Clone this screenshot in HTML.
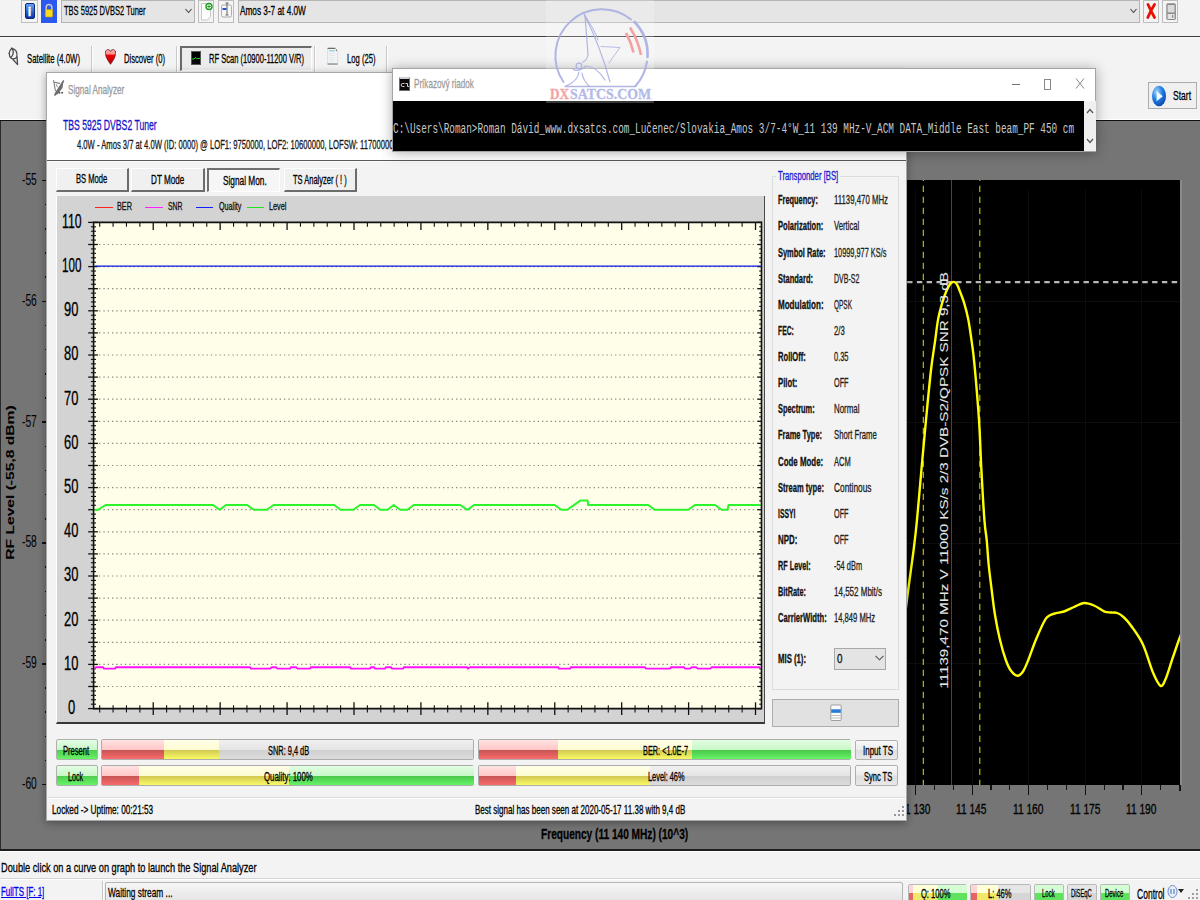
<!DOCTYPE html>
<html><head><meta charset="utf-8"><title>Signal Analyzer</title><style>
html,body{margin:0;padding:0;}
body{width:1200px;height:900px;overflow:hidden;position:relative;background:#f0f0f0;
font-family:"Liberation Sans", sans-serif;}
.t{position:absolute;white-space:nowrap;}
div{box-sizing:border-box;}
svg{position:absolute;}
</style></head><body>
<div style="position:absolute;left:0.00px;top:0.00px;width:1200.00px;height:36.00px;background:#f3f3f3;"></div>
<div style="position:absolute;left:0.00px;top:36.00px;width:1200.00px;height:1.00px;background:#3c3c3c;"></div>
<div style="position:absolute;left:0.00px;top:37.00px;width:1200.00px;height:1.00px;background:#fafafa;"></div>
<div style="position:absolute;left:21.00px;top:0.00px;width:16.50px;height:22.50px;background:#f4f4f4;border:1px solid #bdbdbd;"></div>
<div style="position:absolute;left:24.50px;top:3.00px;width:10.00px;height:15.50px;background:linear-gradient(#6aa0f0,#0c2ea8);border-radius:2px;border:1px solid #0a2a80;"></div>
<div class="t" style="left:27.70px;top:4.99px;font-size:13.00px;line-height:13.00px;color:#fff;font-weight:bold;-webkit-text-stroke:0.30px #fff;">i</div>
<div style="position:absolute;left:41.00px;top:0.00px;width:16.00px;height:22.50px;background:#2b58ee;"></div>
<svg style="left:44px;top:2px" width="10" height="16" viewBox="0 0 10 16"><path d="M2.2 8V5.2a2.8 2.8 0 0 1 5.6 0V8" fill="none" stroke="#c8c8c8" stroke-width="1.5"/><rect x="1.3" y="7.5" width="7.4" height="7.5" rx="1" fill="#f6dc1a" stroke="#c09a00" stroke-width="0.6"/></svg>
<div style="position:absolute;left:61.00px;top:0.00px;width:133.50px;height:22.50px;background:#e5e5e5;border:1px solid #b4b4b4;"></div>
<div class="t" style="left:63.50px;top:3.57px;font-size:13.50px;line-height:13.50px;color:#000;transform:scaleX(0.5571);transform-origin:0 0;-webkit-text-stroke:0.30px #000;">TBS 5925 DVBS2 Tuner</div>
<svg style="left:185px;top:8px" width="7" height="6" viewBox="0 0 7 6"><path d="M0.5 1L3.5 4.5L6.5 1" fill="none" stroke="#444" stroke-width="1.1"/></svg>
<div style="position:absolute;left:198.00px;top:0.00px;width:16.00px;height:22.50px;background:#f4f4f4;border:1px solid #bdbdbd;"></div>
<svg style="left:200px;top:1px" width="13" height="20" viewBox="0 0 13 20"><path d="M1.5 2.5h6l3 3v10l-3 3.5h-6z" fill="#fdfdfd" stroke="#bdbdbd" stroke-width="0.8"/><circle cx="9" cy="5.5" r="3" fill="#fff" stroke="#1aa01a" stroke-width="1.4"/><path d="M9 3.8v3.4M7.3 5.5h3.4" stroke="#1aa01a" stroke-width="1"/></svg>
<div style="position:absolute;left:218.00px;top:0.00px;width:16.00px;height:22.50px;background:#f4f4f4;border:1px solid #bdbdbd;"></div>
<svg style="left:220px;top:2px" width="13" height="17" viewBox="0 0 13 17"><rect x="1.5" y="3" width="10" height="12" rx="1.5" fill="#f6f6f6" stroke="#9a9a9a" stroke-width="0.8"/><rect x="2.5" y="6" width="4" height="2" fill="#2050d0"/><path d="M7 1v12M5.5 1h3M5.5 13h3" stroke="#555" stroke-width="0.9"/></svg>
<div style="position:absolute;left:237.50px;top:0.00px;width:902.00px;height:22.50px;background:#e5e5e5;border:1px solid #b4b4b4;"></div>
<div class="t" style="left:240.00px;top:3.57px;font-size:13.50px;line-height:13.50px;color:#000;transform:scaleX(0.6093);transform-origin:0 0;-webkit-text-stroke:0.30px #000;">Amos 3-7 at 4.0W</div>
<svg style="left:1130px;top:8px" width="7" height="6" viewBox="0 0 7 6"><path d="M0.5 1L3.5 4.5L6.5 1" fill="none" stroke="#444" stroke-width="1.1"/></svg>
<div style="position:absolute;left:1143.00px;top:0.00px;width:16.00px;height:22.50px;background:#f4f4f4;border:1px solid #bdbdbd;"></div>
<svg style="left:1145px;top:2px" width="12" height="18" viewBox="0 0 12 18"><path d="M3 2.5Q6 9 9.5 15.5M9.5 2.5Q6 8 2.8 15.5" fill="none" stroke="#e81000" stroke-width="2.8" stroke-linecap="round"/></svg>
<div style="position:absolute;left:1162.00px;top:0.00px;width:16.00px;height:22.50px;background:#f4f4f4;border:1px solid #bdbdbd;"></div>
<svg style="left:1164px;top:2px" width="14" height="19" viewBox="0 0 14 19"><rect x="2.3" y="1.3" width="9.6" height="16.6" rx="1.6" fill="#8a8a8a"/><rect x="3.6" y="3" width="7" height="7.5" fill="#dadada"/><rect x="3.6" y="12" width="7" height="5" fill="#e4e4e4"/><rect x="8.2" y="13" width="1" height="2.8" fill="#777"/></svg>
<div style="position:absolute;left:0.00px;top:38.00px;width:1200.00px;height:80.80px;background:#f3f3f3;"></div>
<div style="position:absolute;left:91.00px;top:46.00px;width:1.00px;height:25.50px;background:#c8c8c8;"></div>
<div style="position:absolute;left:92.00px;top:46.00px;width:1.00px;height:25.50px;background:#ffffff;"></div>
<div style="position:absolute;left:176.00px;top:46.00px;width:1.00px;height:25.50px;background:#c8c8c8;"></div>
<div style="position:absolute;left:177.00px;top:46.00px;width:1.00px;height:25.50px;background:#ffffff;"></div>
<div style="position:absolute;left:313.50px;top:46.00px;width:1.00px;height:25.50px;background:#c8c8c8;"></div>
<div style="position:absolute;left:314.50px;top:46.00px;width:1.00px;height:25.50px;background:#ffffff;"></div>
<div style="position:absolute;left:386.00px;top:46.00px;width:1.00px;height:25.50px;background:#c8c8c8;"></div>
<div style="position:absolute;left:387.00px;top:46.00px;width:1.00px;height:25.50px;background:#ffffff;"></div>
<svg style="left:0px;top:40px" width="30" height="30" viewBox="0 40 30 30"><g fill="none" stroke="#4a4a4a" stroke-width="1.3" stroke-linejoin="round" stroke-linecap="round"><path d="M11.8 48.3C15.5 48.8 17.6 52 16.8 56.6"/><path d="M11.8 48.3C14 50.5 13.6 54.5 11.5 56.8"/><path d="M9.2 53.2C9.3 58 12 60.6 16.6 57.6"/><path d="M11.8 48.3C10.2 49.8 9.3 51.3 9.2 53.2"/><path d="M13 59.5L17.6 64.6L17 56.8"/></g></svg>
<div class="t" style="left:27.00px;top:51.57px;font-size:13.50px;line-height:13.50px;color:#000;transform:scaleX(0.5742);transform-origin:0 0;-webkit-text-stroke:0.30px #000;">Satellite (4.0W)</div>
<svg style="left:104.5px;top:48.5px" width="11" height="16" viewBox="0 0 11 16"><defs><linearGradient id="hg" x1="0" y1="0" x2="0" y2="1"><stop offset="0" stop-color="#ffb0b0"/><stop offset="0.3" stop-color="#ff9090"/><stop offset="0.38" stop-color="#f00000"/><stop offset="1" stop-color="#c00000"/></linearGradient></defs><path d="M5.5 15.3C2.5 11 0.5 8 0.5 4.2A2.6 2.8 0 0 1 5.5 2.6A2.6 2.8 0 0 1 10.5 4.2C10.5 8 8.5 11 5.5 15.3z" fill="url(#hg)" stroke="#5a1010" stroke-width="0.7"/></svg>
<div class="t" style="left:124.00px;top:51.57px;font-size:13.50px;line-height:13.50px;color:#000;transform:scaleX(0.5632);transform-origin:0 0;-webkit-text-stroke:0.30px #000;">Discover (0)</div>
<div style="position:absolute;left:179.60px;top:45.60px;width:132.20px;height:25.80px;background:#ececec;border-top:2px solid #6a6a6a;border-left:2px solid #6a6a6a;border-right:1px solid #fff;border-bottom:1px solid #fff;"></div>
<div style="position:absolute;left:191.00px;top:51.00px;width:9.50px;height:14.00px;background:#000;border:1px solid #555;"></div>
<svg style="left:191px;top:51px" width="10" height="14" viewBox="0 0 10 14"><path d="M1 8h2l1.5-1.5l1 1h3.5" fill="none" stroke="#10d010" stroke-width="1"/></svg>
<div class="t" style="left:209.00px;top:51.57px;font-size:13.50px;line-height:13.50px;color:#000;transform:scaleX(0.5585);transform-origin:0 0;-webkit-text-stroke:0.30px #000;">RF Scan (10900-11200 V/R)</div>
<svg style="left:326px;top:47px" width="13" height="19" viewBox="0 0 13 19"><path d="M1.6 1.3h7.8l2.2 2.3v13.6H1.6z" fill="#f2f4f6" stroke="#d6d8da" stroke-width="0.8"/><path d="M1.6 1.3h7.8M1.6 17h10" stroke="#6e6e6e" stroke-width="1.2"/><rect x="3" y="3" width="5.5" height="1.6" fill="#a8d4ea"/><path d="M3 6.5h6M3 8.5h6M3 10.5h5M3 12.5h6M3 14.5h5" stroke="#dfe2e6" stroke-width="0.7"/><circle cx="10.4" cy="3.3" r="0.7" fill="#666"/></svg>
<div class="t" style="left:347.00px;top:51.57px;font-size:13.50px;line-height:13.50px;color:#000;transform:scaleX(0.5666);transform-origin:0 0;-webkit-text-stroke:0.30px #000;">Log (25)</div>
<div style="position:absolute;left:1148.00px;top:82.00px;width:49.00px;height:26.50px;background:#f0f0f0;border:1px solid #adadad;"></div>
<svg style="left:1151px;top:87.5px" width="16" height="16" viewBox="0 0 16 16" overflow="visible"><defs><radialGradient id="sg" cx="0.35" cy="0.3" r="0.8"><stop offset="0" stop-color="#9fd4ff"/><stop offset="0.5" stop-color="#1f7ce0"/><stop offset="1" stop-color="#0a3ea8"/></radialGradient></defs><ellipse cx="8" cy="8" rx="7" ry="10.3" fill="url(#sg)"/><path d="M5.6 3L11.8 8.2L5.6 13.2z" fill="#f0faff"/></svg>
<div class="t" style="left:1173.00px;top:88.57px;font-size:13.50px;line-height:13.50px;color:#000;transform:scaleX(0.6316);transform-origin:0 0;-webkit-text-stroke:0.30px #000;">Start</div>
<div style="position:absolute;left:0.00px;top:118.80px;width:1200.00px;height:1.20px;background:#ffffff;"></div>
<div style="position:absolute;left:0.00px;top:120.00px;width:1200.00px;height:730.00px;background:#757575;"></div>
<div style="position:absolute;left:0.00px;top:120.00px;width:1200.00px;height:1.20px;background:#101010;"></div>
<div style="position:absolute;left:0.00px;top:121.00px;width:1.00px;height:729.00px;background:#2a2a2a;"></div>
<div style="position:absolute;left:0.00px;top:849.00px;width:1200.00px;height:1.50px;background:#1e1e1e;"></div>
<div style="position:absolute;left:47.00px;top:180.00px;width:1133.00px;height:605.00px;background:#000;"></div>
<div style="position:absolute;left:1180.00px;top:180.00px;width:1.60px;height:605.00px;background:#8a8a8a;"></div>
<div style="position:absolute;left:47.00px;top:300.78px;width:1133.00px;height:1.00px;background:#0d0d0d;"></div>
<div style="position:absolute;left:47.00px;top:421.66px;width:1133.00px;height:1.00px;background:#0d0d0d;"></div>
<div style="position:absolute;left:47.00px;top:542.54px;width:1133.00px;height:1.00px;background:#0d0d0d;"></div>
<div style="position:absolute;left:47.00px;top:663.42px;width:1133.00px;height:1.00px;background:#0d0d0d;"></div>
<div style="position:absolute;left:66.00px;top:190.00px;width:1.00px;height:595.00px;background:#0c0c0c;"></div>
<div style="position:absolute;left:122.60px;top:190.00px;width:1.00px;height:595.00px;background:#0c0c0c;"></div>
<div style="position:absolute;left:179.20px;top:190.00px;width:1.00px;height:595.00px;background:#0c0c0c;"></div>
<div style="position:absolute;left:235.80px;top:190.00px;width:1.00px;height:595.00px;background:#0c0c0c;"></div>
<div style="position:absolute;left:292.40px;top:190.00px;width:1.00px;height:595.00px;background:#0c0c0c;"></div>
<div style="position:absolute;left:349.00px;top:190.00px;width:1.00px;height:595.00px;background:#0c0c0c;"></div>
<div style="position:absolute;left:405.60px;top:190.00px;width:1.00px;height:595.00px;background:#0c0c0c;"></div>
<div style="position:absolute;left:462.20px;top:190.00px;width:1.00px;height:595.00px;background:#0c0c0c;"></div>
<div style="position:absolute;left:518.80px;top:190.00px;width:1.00px;height:595.00px;background:#0c0c0c;"></div>
<div style="position:absolute;left:575.40px;top:190.00px;width:1.00px;height:595.00px;background:#0c0c0c;"></div>
<div style="position:absolute;left:632.00px;top:190.00px;width:1.00px;height:595.00px;background:#0c0c0c;"></div>
<div style="position:absolute;left:688.60px;top:190.00px;width:1.00px;height:595.00px;background:#0c0c0c;"></div>
<div style="position:absolute;left:745.20px;top:190.00px;width:1.00px;height:595.00px;background:#0c0c0c;"></div>
<div style="position:absolute;left:801.80px;top:190.00px;width:1.00px;height:595.00px;background:#0c0c0c;"></div>
<div style="position:absolute;left:858.40px;top:190.00px;width:1.00px;height:595.00px;background:#0c0c0c;"></div>
<div style="position:absolute;left:915.00px;top:190.00px;width:1.00px;height:595.00px;background:#0c0c0c;"></div>
<div style="position:absolute;left:971.60px;top:190.00px;width:1.00px;height:595.00px;background:#0c0c0c;"></div>
<div style="position:absolute;left:1028.20px;top:190.00px;width:1.00px;height:595.00px;background:#0c0c0c;"></div>
<div style="position:absolute;left:1084.80px;top:190.00px;width:1.00px;height:595.00px;background:#0c0c0c;"></div>
<div style="position:absolute;left:1141.40px;top:190.00px;width:1.00px;height:595.00px;background:#0c0c0c;"></div>
<div style="position:absolute;left:950.80px;top:180.00px;width:1.00px;height:605.00px;background:#1f601f;"></div>
<div style="position:absolute;left:0;top:0;width:1200px;height:900px;clip-path:polygon(47px 180px,1180px 180px,1180px 785px,47px 785px);"><svg style="left:0;top:0" width="1200" height="900" viewBox="0 0 1200 900"><line x1="54.5" y1="282.2" x2="1180" y2="282.2" stroke="#b8b8b8" stroke-width="2.2" stroke-dasharray="5.4 4.4"/><line x1="923.3" y1="174.8" x2="923.3" y2="785" stroke="#d0c800" stroke-width="1.1" stroke-dasharray="6.2 4.8"/><line x1="979.8" y1="174.8" x2="979.8" y2="785" stroke="#d0c800" stroke-width="1.1" stroke-dasharray="6.2 4.8"/><path d="M895.00 700.00 C896.83 684.50 902.90 632.00 906.00 607.00 C909.10 582.00 911.77 564.50 913.60 550.00 C915.43 535.50 915.70 533.33 917.00 520.00 C918.30 506.67 919.90 486.67 921.40 470.00 C922.90 453.33 924.40 436.67 926.00 420.00 C927.60 403.33 929.50 383.05 931.00 370.00 C932.50 356.95 933.82 350.13 935.00 341.70 C936.18 333.27 936.90 325.88 938.10 319.40 C939.30 312.92 940.87 307.42 942.20 302.80 C943.53 298.18 944.83 294.75 946.10 291.70 C947.37 288.65 948.73 286.08 949.80 284.50 C950.87 282.92 951.63 282.57 952.50 282.20 C953.37 281.83 954.15 281.73 955.00 282.30 C955.85 282.87 956.77 284.03 957.60 285.60 C958.43 287.17 958.92 288.83 960.00 291.70 C961.08 294.57 962.72 298.18 964.10 302.80 C965.48 307.42 967.03 312.92 968.30 319.40 C969.57 325.88 970.68 334.28 971.70 341.70 C972.72 349.12 973.18 350.85 974.40 363.90 C975.62 376.95 977.83 402.32 979.00 420.00 C980.17 437.68 980.50 453.33 981.40 470.00 C982.30 486.67 983.52 508.33 984.40 520.00 C985.28 531.67 985.98 532.50 986.70 540.00 C987.42 547.50 987.87 556.67 988.70 565.00 C989.53 573.33 990.65 581.67 991.70 590.00 C992.75 598.33 993.62 606.67 995.00 615.00 C996.38 623.33 998.20 632.50 1000.00 640.00 C1001.80 647.50 1003.97 654.87 1005.80 660.00 C1007.63 665.13 1009.05 668.17 1011.00 670.80 C1012.95 673.43 1015.50 675.68 1017.50 675.80 C1019.50 675.92 1021.20 674.13 1023.00 671.50 C1024.80 668.87 1026.17 665.25 1028.30 660.00 C1030.43 654.75 1033.02 646.67 1035.80 640.00 C1038.58 633.33 1042.63 624.12 1045.00 620.00 C1047.37 615.88 1048.17 616.43 1050.00 615.30 C1051.83 614.17 1053.67 613.83 1056.00 613.20 C1058.33 612.57 1061.00 612.53 1064.00 611.50 C1067.00 610.47 1070.67 608.42 1074.00 607.00 C1077.33 605.58 1080.67 603.25 1084.00 603.00 C1087.33 602.75 1090.67 604.12 1094.00 605.50 C1097.33 606.88 1101.17 610.13 1104.00 611.30 C1106.83 612.47 1108.78 612.22 1111.00 612.50 C1113.22 612.78 1115.13 612.17 1117.30 613.00 C1119.47 613.83 1121.77 615.45 1124.00 617.50 C1126.23 619.55 1127.58 620.88 1130.70 625.30 C1133.82 629.72 1138.93 636.00 1142.70 644.00 C1146.47 652.00 1150.30 666.30 1153.30 673.30 C1156.30 680.30 1158.58 685.22 1160.70 686.00 C1162.82 686.78 1164.12 682.33 1166.00 678.00 C1167.88 673.67 1169.88 666.25 1172.00 660.00 C1174.12 653.75 1177.03 645.17 1178.70 640.50 C1180.37 635.83 1181.45 633.42 1182.00 632.00" fill="none" stroke="#ffff00" stroke-width="2.4" stroke-linejoin="round"/></svg></div>
<div class="t" style="left:948.40px;top:676.29px;font-size:15.00px;line-height:15.00px;color:#e6e6e6;transform-origin:0.00px 12.71px;transform:rotate(-90deg) scale(1.0134,0.7171);-webkit-text-stroke:0.1px #e6e6e6;">11139,470 MHz V 11000 KS/s 2/3 DVB-S2/QPSK SNR 9,3 dB</div>
<div style="position:absolute;left:42.30px;top:179.70px;width:4.70px;height:1.40px;background:#111;"></div>
<div style="position:absolute;left:45.20px;top:203.78px;width:1.80px;height:1.60px;background:#111;"></div>
<div style="position:absolute;left:45.20px;top:227.95px;width:1.80px;height:1.60px;background:#111;"></div>
<div style="position:absolute;left:45.20px;top:252.13px;width:1.80px;height:1.60px;background:#111;"></div>
<div style="position:absolute;left:45.20px;top:276.30px;width:1.80px;height:1.60px;background:#111;"></div>
<div class="t" style="left:22.20px;top:171.75px;font-size:16.00px;line-height:16.00px;color:#000;transform:scaleX(0.6407);transform-origin:0 0;-webkit-text-stroke:0.05px #000;">-55</div>
<div style="position:absolute;left:42.30px;top:300.58px;width:4.70px;height:1.40px;background:#111;"></div>
<div style="position:absolute;left:45.20px;top:324.66px;width:1.80px;height:1.60px;background:#111;"></div>
<div style="position:absolute;left:45.20px;top:348.83px;width:1.80px;height:1.60px;background:#111;"></div>
<div style="position:absolute;left:45.20px;top:373.01px;width:1.80px;height:1.60px;background:#111;"></div>
<div style="position:absolute;left:45.20px;top:397.18px;width:1.80px;height:1.60px;background:#111;"></div>
<div class="t" style="left:22.20px;top:292.63px;font-size:16.00px;line-height:16.00px;color:#000;transform:scaleX(0.6407);transform-origin:0 0;-webkit-text-stroke:0.05px #000;">-56</div>
<div style="position:absolute;left:42.30px;top:421.46px;width:4.70px;height:1.40px;background:#111;"></div>
<div style="position:absolute;left:45.20px;top:445.54px;width:1.80px;height:1.60px;background:#111;"></div>
<div style="position:absolute;left:45.20px;top:469.71px;width:1.80px;height:1.60px;background:#111;"></div>
<div style="position:absolute;left:45.20px;top:493.89px;width:1.80px;height:1.60px;background:#111;"></div>
<div style="position:absolute;left:45.20px;top:518.06px;width:1.80px;height:1.60px;background:#111;"></div>
<div class="t" style="left:22.20px;top:413.51px;font-size:16.00px;line-height:16.00px;color:#000;transform:scaleX(0.6407);transform-origin:0 0;-webkit-text-stroke:0.05px #000;">-57</div>
<div style="position:absolute;left:42.30px;top:542.34px;width:4.70px;height:1.40px;background:#111;"></div>
<div style="position:absolute;left:45.20px;top:566.42px;width:1.80px;height:1.60px;background:#111;"></div>
<div style="position:absolute;left:45.20px;top:590.59px;width:1.80px;height:1.60px;background:#111;"></div>
<div style="position:absolute;left:45.20px;top:614.77px;width:1.80px;height:1.60px;background:#111;"></div>
<div style="position:absolute;left:45.20px;top:638.94px;width:1.80px;height:1.60px;background:#111;"></div>
<div class="t" style="left:22.20px;top:534.39px;font-size:16.00px;line-height:16.00px;color:#000;transform:scaleX(0.6407);transform-origin:0 0;-webkit-text-stroke:0.05px #000;">-58</div>
<div style="position:absolute;left:42.30px;top:663.22px;width:4.70px;height:1.40px;background:#111;"></div>
<div style="position:absolute;left:45.20px;top:687.30px;width:1.80px;height:1.60px;background:#111;"></div>
<div style="position:absolute;left:45.20px;top:711.47px;width:1.80px;height:1.60px;background:#111;"></div>
<div style="position:absolute;left:45.20px;top:735.65px;width:1.80px;height:1.60px;background:#111;"></div>
<div style="position:absolute;left:45.20px;top:759.82px;width:1.80px;height:1.60px;background:#111;"></div>
<div class="t" style="left:22.20px;top:655.27px;font-size:16.00px;line-height:16.00px;color:#000;transform:scaleX(0.6407);transform-origin:0 0;-webkit-text-stroke:0.05px #000;">-59</div>
<div style="position:absolute;left:42.30px;top:784.10px;width:4.70px;height:1.40px;background:#111;"></div>
<div class="t" style="left:22.20px;top:776.15px;font-size:16.00px;line-height:16.00px;color:#000;transform:scaleX(0.6407);transform-origin:0 0;-webkit-text-stroke:0.05px #000;">-60</div>
<div class="t" style="left:14.40px;top:547.29px;font-size:15.00px;line-height:15.00px;color:#000;font-weight:bold;transform-origin:0.00px 12.71px;transform:rotate(-90deg) scale(1.0404,0.7461);-webkit-text-stroke:0.1px #000;">RF Level (-55,8 dBm)</div>
<div style="position:absolute;left:65.90px;top:785.00px;width:1.20px;height:10.00px;background:#111;"></div>
<div style="position:absolute;left:84.77px;top:785.00px;width:1.20px;height:5.00px;background:#111;"></div>
<div style="position:absolute;left:103.64px;top:785.00px;width:1.20px;height:5.00px;background:#111;"></div>
<div style="position:absolute;left:122.50px;top:785.00px;width:1.20px;height:10.00px;background:#111;"></div>
<div style="position:absolute;left:141.37px;top:785.00px;width:1.20px;height:5.00px;background:#111;"></div>
<div style="position:absolute;left:160.24px;top:785.00px;width:1.20px;height:5.00px;background:#111;"></div>
<div style="position:absolute;left:179.10px;top:785.00px;width:1.20px;height:10.00px;background:#111;"></div>
<div style="position:absolute;left:197.97px;top:785.00px;width:1.20px;height:5.00px;background:#111;"></div>
<div style="position:absolute;left:216.84px;top:785.00px;width:1.20px;height:5.00px;background:#111;"></div>
<div style="position:absolute;left:235.70px;top:785.00px;width:1.20px;height:10.00px;background:#111;"></div>
<div style="position:absolute;left:254.57px;top:785.00px;width:1.20px;height:5.00px;background:#111;"></div>
<div style="position:absolute;left:273.44px;top:785.00px;width:1.20px;height:5.00px;background:#111;"></div>
<div style="position:absolute;left:292.30px;top:785.00px;width:1.20px;height:10.00px;background:#111;"></div>
<div style="position:absolute;left:311.17px;top:785.00px;width:1.20px;height:5.00px;background:#111;"></div>
<div style="position:absolute;left:330.04px;top:785.00px;width:1.20px;height:5.00px;background:#111;"></div>
<div style="position:absolute;left:348.90px;top:785.00px;width:1.20px;height:10.00px;background:#111;"></div>
<div style="position:absolute;left:367.77px;top:785.00px;width:1.20px;height:5.00px;background:#111;"></div>
<div style="position:absolute;left:386.64px;top:785.00px;width:1.20px;height:5.00px;background:#111;"></div>
<div style="position:absolute;left:405.50px;top:785.00px;width:1.20px;height:10.00px;background:#111;"></div>
<div style="position:absolute;left:424.37px;top:785.00px;width:1.20px;height:5.00px;background:#111;"></div>
<div style="position:absolute;left:443.24px;top:785.00px;width:1.20px;height:5.00px;background:#111;"></div>
<div style="position:absolute;left:462.10px;top:785.00px;width:1.20px;height:10.00px;background:#111;"></div>
<div style="position:absolute;left:480.97px;top:785.00px;width:1.20px;height:5.00px;background:#111;"></div>
<div style="position:absolute;left:499.84px;top:785.00px;width:1.20px;height:5.00px;background:#111;"></div>
<div style="position:absolute;left:518.70px;top:785.00px;width:1.20px;height:10.00px;background:#111;"></div>
<div style="position:absolute;left:537.57px;top:785.00px;width:1.20px;height:5.00px;background:#111;"></div>
<div style="position:absolute;left:556.44px;top:785.00px;width:1.20px;height:5.00px;background:#111;"></div>
<div style="position:absolute;left:575.30px;top:785.00px;width:1.20px;height:10.00px;background:#111;"></div>
<div style="position:absolute;left:594.17px;top:785.00px;width:1.20px;height:5.00px;background:#111;"></div>
<div style="position:absolute;left:613.04px;top:785.00px;width:1.20px;height:5.00px;background:#111;"></div>
<div style="position:absolute;left:631.90px;top:785.00px;width:1.20px;height:10.00px;background:#111;"></div>
<div style="position:absolute;left:650.77px;top:785.00px;width:1.20px;height:5.00px;background:#111;"></div>
<div style="position:absolute;left:669.64px;top:785.00px;width:1.20px;height:5.00px;background:#111;"></div>
<div style="position:absolute;left:688.50px;top:785.00px;width:1.20px;height:10.00px;background:#111;"></div>
<div style="position:absolute;left:707.37px;top:785.00px;width:1.20px;height:5.00px;background:#111;"></div>
<div style="position:absolute;left:726.24px;top:785.00px;width:1.20px;height:5.00px;background:#111;"></div>
<div style="position:absolute;left:745.10px;top:785.00px;width:1.20px;height:10.00px;background:#111;"></div>
<div style="position:absolute;left:763.97px;top:785.00px;width:1.20px;height:5.00px;background:#111;"></div>
<div style="position:absolute;left:782.84px;top:785.00px;width:1.20px;height:5.00px;background:#111;"></div>
<div style="position:absolute;left:801.70px;top:785.00px;width:1.20px;height:10.00px;background:#111;"></div>
<div style="position:absolute;left:820.57px;top:785.00px;width:1.20px;height:5.00px;background:#111;"></div>
<div style="position:absolute;left:839.44px;top:785.00px;width:1.20px;height:5.00px;background:#111;"></div>
<div style="position:absolute;left:858.30px;top:785.00px;width:1.20px;height:10.00px;background:#111;"></div>
<div style="position:absolute;left:877.17px;top:785.00px;width:1.20px;height:5.00px;background:#111;"></div>
<div style="position:absolute;left:896.04px;top:785.00px;width:1.20px;height:5.00px;background:#111;"></div>
<div style="position:absolute;left:914.90px;top:785.00px;width:1.20px;height:10.00px;background:#111;"></div>
<div style="position:absolute;left:933.77px;top:785.00px;width:1.20px;height:5.00px;background:#111;"></div>
<div style="position:absolute;left:952.64px;top:785.00px;width:1.20px;height:5.00px;background:#111;"></div>
<div style="position:absolute;left:971.50px;top:785.00px;width:1.20px;height:10.00px;background:#111;"></div>
<div style="position:absolute;left:990.37px;top:785.00px;width:1.20px;height:5.00px;background:#111;"></div>
<div style="position:absolute;left:1009.24px;top:785.00px;width:1.20px;height:5.00px;background:#111;"></div>
<div style="position:absolute;left:1028.10px;top:785.00px;width:1.20px;height:10.00px;background:#111;"></div>
<div style="position:absolute;left:1046.97px;top:785.00px;width:1.20px;height:5.00px;background:#111;"></div>
<div style="position:absolute;left:1065.84px;top:785.00px;width:1.20px;height:5.00px;background:#111;"></div>
<div style="position:absolute;left:1084.70px;top:785.00px;width:1.20px;height:10.00px;background:#111;"></div>
<div style="position:absolute;left:1103.57px;top:785.00px;width:1.20px;height:5.00px;background:#111;"></div>
<div style="position:absolute;left:1122.44px;top:785.00px;width:1.20px;height:5.00px;background:#111;"></div>
<div style="position:absolute;left:1141.30px;top:785.00px;width:1.20px;height:10.00px;background:#111;"></div>
<div style="position:absolute;left:1160.17px;top:785.00px;width:1.20px;height:5.00px;background:#111;"></div>
<div style="position:absolute;left:1179.04px;top:785.00px;width:1.20px;height:5.00px;background:#111;"></div>
<div style="position:absolute;left:1179.40px;top:785.00px;width:1.20px;height:5.50px;background:#111;"></div>
<div class="t" style="left:899.75px;top:801.84px;font-size:14.00px;line-height:14.00px;color:#000;transform:scaleX(0.7297);transform-origin:0 0;-webkit-text-stroke:0.30px #000;">11 130</div>
<div class="t" style="left:956.35px;top:801.84px;font-size:14.00px;line-height:14.00px;color:#000;transform:scaleX(0.7297);transform-origin:0 0;-webkit-text-stroke:0.30px #000;">11 145</div>
<div class="t" style="left:1012.95px;top:801.84px;font-size:14.00px;line-height:14.00px;color:#000;transform:scaleX(0.7297);transform-origin:0 0;-webkit-text-stroke:0.30px #000;">11 160</div>
<div class="t" style="left:1069.55px;top:801.84px;font-size:14.00px;line-height:14.00px;color:#000;transform:scaleX(0.7297);transform-origin:0 0;-webkit-text-stroke:0.30px #000;">11 175</div>
<div class="t" style="left:1126.15px;top:801.84px;font-size:14.00px;line-height:14.00px;color:#000;transform:scaleX(0.7297);transform-origin:0 0;-webkit-text-stroke:0.30px #000;">11 190</div>
<div class="t" style="left:540.80px;top:827.34px;font-size:14.00px;line-height:14.00px;color:#000;font-weight:bold;transform:scaleX(0.7233);transform-origin:0 0;-webkit-text-stroke:0.30px #000;">Frequency (11 140 MHz) (10^3)</div>
<div style="position:absolute;left:0.00px;top:850.50px;width:1200.00px;height:49.50px;background:#f3f3f3;"></div>
<div style="position:absolute;left:0.00px;top:851.00px;width:1200.00px;height:1.00px;background:#ffffff;"></div>
<div class="t" style="left:0.50px;top:861.32px;font-size:13.50px;line-height:13.50px;color:#000;transform:scaleX(0.6822);transform-origin:0 0;-webkit-text-stroke:0.30px #000;">Double click on a curve on graph to launch the Signal Analyzer</div>
<div style="position:absolute;left:0.00px;top:878.00px;width:1200.00px;height:1.00px;background:#d4d4d4;"></div>
<div style="position:absolute;left:0.00px;top:879.00px;width:1200.00px;height:1.00px;background:#ffffff;"></div>
<div class="t" style="left:0.70px;top:885.27px;font-size:13.50px;line-height:13.50px;color:#0000ee;transform:scaleX(0.5891);transform-origin:0 0;-webkit-text-stroke:0.30px #0000ee;text-decoration:underline;">FullTS [F: 1]</div>
<div style="position:absolute;left:102.00px;top:881.00px;width:1.00px;height:19.00px;background:#c4c4c4;"></div>
<div style="position:absolute;left:103.00px;top:881.00px;width:1.00px;height:19.00px;background:#ffffff;"></div>
<div style="position:absolute;left:105.30px;top:881.70px;width:797.70px;height:23.30px;background:linear-gradient(#f6f6f6,#e2e2e2);border:1px solid #b4b4b4;border-radius:2px;"></div>
<div class="t" style="left:107.50px;top:886.07px;font-size:13.50px;line-height:13.50px;color:#000;transform:scaleX(0.6172);transform-origin:0 0;-webkit-text-stroke:0.30px #000;">Waiting stream ...</div>
<div style="position:absolute;left:907.50px;top:883.50px;width:59.70px;height:18.50px;background:#f0f0f0;border:1px solid #b8b8b8;border-radius:2px;"></div>
<div style="position:absolute;left:908.50px;top:884.50px;width:4.50px;height:8.75px;background:#ffd4d4;"></div>
<div style="position:absolute;left:908.50px;top:893.25px;width:4.50px;height:7.75px;background:#e86464;"></div>
<div style="position:absolute;left:913.00px;top:884.50px;width:25.00px;height:8.75px;background:#ffffd8;"></div>
<div style="position:absolute;left:913.00px;top:893.25px;width:25.00px;height:7.75px;background:#f0e868;"></div>
<div style="position:absolute;left:938.00px;top:884.50px;width:29.20px;height:8.75px;background:#d4fdd4;"></div>
<div style="position:absolute;left:938.00px;top:893.25px;width:29.20px;height:7.75px;background:#5fe35f;"></div>
<div class="t" style="left:921.30px;top:886.99px;font-size:13.00px;line-height:13.00px;color:#000;transform:scaleX(0.5810);transform-origin:0 0;-webkit-text-stroke:0.30px #000;">Q: 100%</div>
<div style="position:absolute;left:970.40px;top:883.50px;width:60.30px;height:18.50px;background:#f0f0f0;border:1px solid #b8b8b8;border-radius:2px;"></div>
<div style="position:absolute;left:971.40px;top:884.50px;width:5.60px;height:8.75px;background:#ffd4d4;"></div>
<div style="position:absolute;left:971.40px;top:893.25px;width:5.60px;height:7.75px;background:#e86464;"></div>
<div style="position:absolute;left:977.00px;top:884.50px;width:21.00px;height:8.75px;background:#ffffd8;"></div>
<div style="position:absolute;left:977.00px;top:893.25px;width:21.00px;height:7.75px;background:#f0e868;"></div>
<div style="position:absolute;left:998.00px;top:884.50px;width:31.70px;height:8.75px;background:#e6e6e6;"></div>
<div style="position:absolute;left:998.00px;top:893.25px;width:31.70px;height:7.75px;background:#d6d6d6;"></div>
<div class="t" style="left:988.00px;top:886.99px;font-size:13.00px;line-height:13.00px;color:#000;transform:scaleX(0.5802);transform-origin:0 0;-webkit-text-stroke:0.30px #000;">L: 46%</div>
<div style="position:absolute;left:1034.00px;top:883.50px;width:29.50px;height:18.50px;background:#f0f0f0;border:1px solid #b8b8b8;border-radius:2px;"></div>
<div style="position:absolute;left:1035.00px;top:884.50px;width:27.50px;height:8.75px;background:#d4fdd4;"></div>
<div style="position:absolute;left:1035.00px;top:893.25px;width:27.50px;height:7.75px;background:#5fe35f;"></div>
<div class="t" style="left:1042.00px;top:888.18px;font-size:11.00px;line-height:11.00px;color:#000;transform:scaleX(0.5451);transform-origin:0 0;-webkit-text-stroke:0.30px #000;">Lock</div>
<div style="position:absolute;left:1067.00px;top:883.50px;width:29.50px;height:18.50px;background:#f0f0f0;border:1px solid #b8b8b8;border-radius:2px;"></div>
<div style="position:absolute;left:1068.00px;top:884.50px;width:27.50px;height:8.75px;background:#e6e6e6;"></div>
<div style="position:absolute;left:1068.00px;top:893.25px;width:27.50px;height:7.75px;background:#d6d6d6;"></div>
<div class="t" style="left:1070.70px;top:888.18px;font-size:11.00px;line-height:11.00px;color:#000;transform:scaleX(0.5320);transform-origin:0 0;-webkit-text-stroke:0.30px #000;">DiSEqC</div>
<div style="position:absolute;left:1100.00px;top:883.50px;width:30.00px;height:18.50px;background:#f0f0f0;border:1px solid #b8b8b8;border-radius:2px;"></div>
<div style="position:absolute;left:1101.00px;top:884.50px;width:28.00px;height:8.75px;background:#d4fdd4;"></div>
<div style="position:absolute;left:1101.00px;top:893.25px;width:28.00px;height:7.75px;background:#5fe35f;"></div>
<div class="t" style="left:1105.30px;top:888.18px;font-size:11.00px;line-height:11.00px;color:#000;transform:scaleX(0.5417);transform-origin:0 0;-webkit-text-stroke:0.30px #000;">Device</div>
<div class="t" style="left:1136.50px;top:886.64px;font-size:14.00px;line-height:14.00px;color:#000;transform:scaleX(0.6098);transform-origin:0 0;-webkit-text-stroke:0.30px #000;">Control</div>
<svg style="left:1167px;top:884px" width="11" height="15" viewBox="0 0 11 15"><ellipse cx="5.5" cy="7.5" rx="4.5" ry="6" fill="#e8eef8" stroke="#6a8acc" stroke-width="1"/><path d="M4 5v5M7 5v5" stroke="#3060b0" stroke-width="0.9"/></svg>
<svg style="left:1178px;top:889px" width="6" height="5" viewBox="0 0 6 5"><path d="M0 0h6L3 4z" fill="#222"/></svg>
<div style="position:absolute;left:46.00px;top:72.40px;width:860.60px;height:748.60px;background:#f3f3f3;border:1px solid #a8a8a8;box-shadow:0 2px 8px rgba(0,0,0,0.35);"></div>
<div style="position:absolute;left:47.00px;top:73.40px;width:858.60px;height:86.60px;background:#ffffff;"></div>
<div style="position:absolute;left:47.00px;top:160.00px;width:858.60px;height:1.30px;background:#5a5a5a;"></div>
<div style="position:absolute;left:47.00px;top:161.30px;width:858.60px;height:1.00px;background:#fafafa;"></div>
<svg style="left:48px;top:76px" width="20" height="24" viewBox="48 76 20 24"><g stroke="#7a7a7a" fill="none" stroke-linecap="round"><path d="M53.6 80.5L55.4 90.5" stroke-width="1.1"/><path d="M54.6 82.2L59.6 83.4" stroke-width="1.1"/><path d="M56.3 84.6L57.4 86.8" stroke-width="0.9"/><path d="M63.4 81L55 95" stroke-width="1.6"/></g><path d="M63.6 80.6L62.5 88L57.5 94.2L54 95.6L55.5 92Z" fill="#6e6e6e"/><circle cx="59.4" cy="92.7" r="1" fill="#555"/><circle cx="62.1" cy="92.7" r="1" fill="#555"/></svg>
<div class="t" style="left:67.60px;top:83.29px;font-size:13.00px;line-height:13.00px;color:#9a9a9a;transform:scaleX(0.6283);transform-origin:0 0;-webkit-text-stroke:0.30px #9a9a9a;">Signal Analyzer</div>
<div class="t" style="left:63.30px;top:118.12px;font-size:14.50px;line-height:14.50px;color:#1515c8;transform:scaleX(0.5961);transform-origin:0 0;-webkit-text-stroke:0.30px #1515c8;">TBS 5925 DVBS2 Tuner</div>
<div class="t" style="left:76.70px;top:138.67px;font-size:12.20px;line-height:12.20px;color:#1a1a1a;transform:scaleX(0.6266);transform-origin:0 0;-webkit-text-stroke:0.30px #1a1a1a;">4.0W - Amos 3/7 at 4.0W (ID: 0000) @ LOF1: 9750000, LOF2: 10600000, LOFSW: 11700000</div>
<div style="position:absolute;left:55.50px;top:168.00px;width:73.50px;height:23.70px;background:#f0f0f0;border-top:1px solid #ffffff;border-left:1px solid #ffffff;border-right:2px solid #6c6c6c;border-bottom:2.5px solid #6c6c6c;"></div>
<div class="t" style="left:76.10px;top:173.41px;font-size:12.50px;line-height:12.50px;color:#000;transform:scaleX(0.6089);transform-origin:0 0;-webkit-text-stroke:0.30px #000;">BS Mode</div>
<div style="position:absolute;left:130.80px;top:168.00px;width:74.20px;height:23.70px;background:#f0f0f0;border-top:1px solid #ffffff;border-left:1px solid #ffffff;border-right:2px solid #6c6c6c;border-bottom:2.5px solid #6c6c6c;"></div>
<div class="t" style="left:151.25px;top:173.81px;font-size:12.50px;line-height:12.50px;color:#000;transform:scaleX(0.6514);transform-origin:0 0;-webkit-text-stroke:0.30px #000;">DT Mode</div>
<div style="position:absolute;left:207.00px;top:168.00px;width:73.40px;height:23.70px;background:#f6f6f6;border-top:2px solid #707070;border-left:2px solid #707070;border-right:1px solid #ffffff;border-bottom:1px solid #ffffff;"></div>
<div class="t" style="left:222.50px;top:174.81px;font-size:12.50px;line-height:12.50px;color:#000;transform:scaleX(0.6629);transform-origin:0 0;-webkit-text-stroke:0.30px #000;">Signal Mon.</div>
<div style="position:absolute;left:283.50px;top:168.00px;width:73.50px;height:23.70px;background:#f0f0f0;border-top:1px solid #ffffff;border-left:1px solid #ffffff;border-right:2px solid #6c6c6c;border-bottom:2.5px solid #6c6c6c;"></div>
<div class="t" style="left:293.00px;top:173.81px;font-size:12.50px;line-height:12.50px;color:#000;transform:scaleX(0.5993);transform-origin:0 0;-webkit-text-stroke:0.30px #000;">TS Analyzer ( ! )</div>
<div style="position:absolute;left:56.30px;top:196.00px;width:708.40px;height:527.60px;background:#d3d3d3;border-right:1.6px solid #4a4a4a;border-bottom:2px solid #383838;border-left:1px solid #ffffff;"></div>
<div style="position:absolute;left:95.00px;top:206.80px;width:17.80px;height:1.20px;background:#ff2020;"></div>
<div class="t" style="left:117.00px;top:201.45px;font-size:10.80px;line-height:10.80px;color:#111;transform:scaleX(0.6757);transform-origin:0 0;-webkit-text-stroke:0.30px #111;">BER</div>
<div style="position:absolute;left:145.00px;top:206.80px;width:17.70px;height:1.20px;background:#ff20ff;"></div>
<div class="t" style="left:168.00px;top:201.45px;font-size:10.80px;line-height:10.80px;color:#111;transform:scaleX(0.6360);transform-origin:0 0;-webkit-text-stroke:0.30px #111;">SNR</div>
<div style="position:absolute;left:196.00px;top:206.80px;width:17.00px;height:1.20px;background:#1020ff;"></div>
<div class="t" style="left:218.50px;top:201.45px;font-size:10.80px;line-height:10.80px;color:#111;transform:scaleX(0.6637);transform-origin:0 0;-webkit-text-stroke:0.30px #111;">Quality</div>
<div style="position:absolute;left:247.00px;top:206.80px;width:17.00px;height:1.20px;background:#20e020;"></div>
<div class="t" style="left:269.40px;top:201.45px;font-size:10.80px;line-height:10.80px;color:#111;transform:scaleX(0.6705);transform-origin:0 0;-webkit-text-stroke:0.30px #111;">Level</div>
<div style="position:absolute;left:93.60px;top:222.40px;width:667.90px;height:486.20px;background:#fffee8;"></div>
<svg style="left:0;top:0" width="1200" height="900" viewBox="0 0 1200 900"><line x1="99.1" y1="686.50" x2="759.5" y2="686.50" stroke="#8a8a80" stroke-width="1.2" stroke-dasharray="1.3 3"/><line x1="99.1" y1="664.40" x2="759.5" y2="664.40" stroke="#8a8a80" stroke-width="1.2" stroke-dasharray="1.3 3"/><line x1="99.1" y1="642.30" x2="759.5" y2="642.30" stroke="#8a8a80" stroke-width="1.2" stroke-dasharray="1.3 3"/><line x1="99.1" y1="620.20" x2="759.5" y2="620.20" stroke="#8a8a80" stroke-width="1.2" stroke-dasharray="1.3 3"/><line x1="99.1" y1="598.10" x2="759.5" y2="598.10" stroke="#8a8a80" stroke-width="1.2" stroke-dasharray="1.3 3"/><line x1="99.1" y1="576.00" x2="759.5" y2="576.00" stroke="#8a8a80" stroke-width="1.2" stroke-dasharray="1.3 3"/><line x1="99.1" y1="553.90" x2="759.5" y2="553.90" stroke="#8a8a80" stroke-width="1.2" stroke-dasharray="1.3 3"/><line x1="99.1" y1="531.80" x2="759.5" y2="531.80" stroke="#8a8a80" stroke-width="1.2" stroke-dasharray="1.3 3"/><line x1="99.1" y1="509.70" x2="759.5" y2="509.70" stroke="#8a8a80" stroke-width="1.2" stroke-dasharray="1.3 3"/><line x1="99.1" y1="487.60" x2="759.5" y2="487.60" stroke="#8a8a80" stroke-width="1.2" stroke-dasharray="1.3 3"/><line x1="99.1" y1="465.50" x2="759.5" y2="465.50" stroke="#8a8a80" stroke-width="1.2" stroke-dasharray="1.3 3"/><line x1="99.1" y1="443.40" x2="759.5" y2="443.40" stroke="#8a8a80" stroke-width="1.2" stroke-dasharray="1.3 3"/><line x1="99.1" y1="421.30" x2="759.5" y2="421.30" stroke="#8a8a80" stroke-width="1.2" stroke-dasharray="1.3 3"/><line x1="99.1" y1="399.20" x2="759.5" y2="399.20" stroke="#8a8a80" stroke-width="1.2" stroke-dasharray="1.3 3"/><line x1="99.1" y1="377.10" x2="759.5" y2="377.10" stroke="#8a8a80" stroke-width="1.2" stroke-dasharray="1.3 3"/><line x1="99.1" y1="355.00" x2="759.5" y2="355.00" stroke="#8a8a80" stroke-width="1.2" stroke-dasharray="1.3 3"/><line x1="99.1" y1="332.90" x2="759.5" y2="332.90" stroke="#8a8a80" stroke-width="1.2" stroke-dasharray="1.3 3"/><line x1="99.1" y1="310.80" x2="759.5" y2="310.80" stroke="#8a8a80" stroke-width="1.2" stroke-dasharray="1.3 3"/><line x1="99.1" y1="288.70" x2="759.5" y2="288.70" stroke="#8a8a80" stroke-width="1.2" stroke-dasharray="1.3 3"/><line x1="99.1" y1="266.60" x2="759.5" y2="266.60" stroke="#8a8a80" stroke-width="1.2" stroke-dasharray="1.3 3"/><line x1="99.1" y1="244.50" x2="759.5" y2="244.50" stroke="#8a8a80" stroke-width="1.2" stroke-dasharray="1.3 3"/><path d="M93.60 222.40H761.50V708.60H93.60Z" fill="none" stroke="#111" stroke-width="1.6"/><line x1="88.2" y1="708.60" x2="97.9" y2="708.60" stroke="#111" stroke-width="1.3"/><line x1="757.5" y1="708.60" x2="761.5" y2="708.60" stroke="#111" stroke-width="1.3"/><line x1="90.9" y1="704.18" x2="96.0" y2="704.18" stroke="#111" stroke-width="1.1"/><line x1="759.2" y1="704.18" x2="761.5" y2="704.18" stroke="#111" stroke-width="1.1"/><line x1="90.9" y1="699.76" x2="96.0" y2="699.76" stroke="#111" stroke-width="1.1"/><line x1="759.2" y1="699.76" x2="761.5" y2="699.76" stroke="#111" stroke-width="1.1"/><line x1="90.9" y1="695.34" x2="96.0" y2="695.34" stroke="#111" stroke-width="1.1"/><line x1="759.2" y1="695.34" x2="761.5" y2="695.34" stroke="#111" stroke-width="1.1"/><line x1="90.9" y1="690.92" x2="96.0" y2="690.92" stroke="#111" stroke-width="1.1"/><line x1="759.2" y1="690.92" x2="761.5" y2="690.92" stroke="#111" stroke-width="1.1"/><line x1="88.2" y1="686.50" x2="97.9" y2="686.50" stroke="#111" stroke-width="1.3"/><line x1="757.5" y1="686.50" x2="761.5" y2="686.50" stroke="#111" stroke-width="1.3"/><line x1="90.9" y1="682.08" x2="96.0" y2="682.08" stroke="#111" stroke-width="1.1"/><line x1="759.2" y1="682.08" x2="761.5" y2="682.08" stroke="#111" stroke-width="1.1"/><line x1="90.9" y1="677.66" x2="96.0" y2="677.66" stroke="#111" stroke-width="1.1"/><line x1="759.2" y1="677.66" x2="761.5" y2="677.66" stroke="#111" stroke-width="1.1"/><line x1="90.9" y1="673.24" x2="96.0" y2="673.24" stroke="#111" stroke-width="1.1"/><line x1="759.2" y1="673.24" x2="761.5" y2="673.24" stroke="#111" stroke-width="1.1"/><line x1="90.9" y1="668.82" x2="96.0" y2="668.82" stroke="#111" stroke-width="1.1"/><line x1="759.2" y1="668.82" x2="761.5" y2="668.82" stroke="#111" stroke-width="1.1"/><line x1="88.2" y1="664.40" x2="97.9" y2="664.40" stroke="#111" stroke-width="1.3"/><line x1="757.5" y1="664.40" x2="761.5" y2="664.40" stroke="#111" stroke-width="1.3"/><line x1="90.9" y1="659.98" x2="96.0" y2="659.98" stroke="#111" stroke-width="1.1"/><line x1="759.2" y1="659.98" x2="761.5" y2="659.98" stroke="#111" stroke-width="1.1"/><line x1="90.9" y1="655.56" x2="96.0" y2="655.56" stroke="#111" stroke-width="1.1"/><line x1="759.2" y1="655.56" x2="761.5" y2="655.56" stroke="#111" stroke-width="1.1"/><line x1="90.9" y1="651.14" x2="96.0" y2="651.14" stroke="#111" stroke-width="1.1"/><line x1="759.2" y1="651.14" x2="761.5" y2="651.14" stroke="#111" stroke-width="1.1"/><line x1="90.9" y1="646.72" x2="96.0" y2="646.72" stroke="#111" stroke-width="1.1"/><line x1="759.2" y1="646.72" x2="761.5" y2="646.72" stroke="#111" stroke-width="1.1"/><line x1="88.2" y1="642.30" x2="97.9" y2="642.30" stroke="#111" stroke-width="1.3"/><line x1="757.5" y1="642.30" x2="761.5" y2="642.30" stroke="#111" stroke-width="1.3"/><line x1="90.9" y1="637.88" x2="96.0" y2="637.88" stroke="#111" stroke-width="1.1"/><line x1="759.2" y1="637.88" x2="761.5" y2="637.88" stroke="#111" stroke-width="1.1"/><line x1="90.9" y1="633.46" x2="96.0" y2="633.46" stroke="#111" stroke-width="1.1"/><line x1="759.2" y1="633.46" x2="761.5" y2="633.46" stroke="#111" stroke-width="1.1"/><line x1="90.9" y1="629.04" x2="96.0" y2="629.04" stroke="#111" stroke-width="1.1"/><line x1="759.2" y1="629.04" x2="761.5" y2="629.04" stroke="#111" stroke-width="1.1"/><line x1="90.9" y1="624.62" x2="96.0" y2="624.62" stroke="#111" stroke-width="1.1"/><line x1="759.2" y1="624.62" x2="761.5" y2="624.62" stroke="#111" stroke-width="1.1"/><line x1="88.2" y1="620.20" x2="97.9" y2="620.20" stroke="#111" stroke-width="1.3"/><line x1="757.5" y1="620.20" x2="761.5" y2="620.20" stroke="#111" stroke-width="1.3"/><line x1="90.9" y1="615.78" x2="96.0" y2="615.78" stroke="#111" stroke-width="1.1"/><line x1="759.2" y1="615.78" x2="761.5" y2="615.78" stroke="#111" stroke-width="1.1"/><line x1="90.9" y1="611.36" x2="96.0" y2="611.36" stroke="#111" stroke-width="1.1"/><line x1="759.2" y1="611.36" x2="761.5" y2="611.36" stroke="#111" stroke-width="1.1"/><line x1="90.9" y1="606.94" x2="96.0" y2="606.94" stroke="#111" stroke-width="1.1"/><line x1="759.2" y1="606.94" x2="761.5" y2="606.94" stroke="#111" stroke-width="1.1"/><line x1="90.9" y1="602.52" x2="96.0" y2="602.52" stroke="#111" stroke-width="1.1"/><line x1="759.2" y1="602.52" x2="761.5" y2="602.52" stroke="#111" stroke-width="1.1"/><line x1="88.2" y1="598.10" x2="97.9" y2="598.10" stroke="#111" stroke-width="1.3"/><line x1="757.5" y1="598.10" x2="761.5" y2="598.10" stroke="#111" stroke-width="1.3"/><line x1="90.9" y1="593.68" x2="96.0" y2="593.68" stroke="#111" stroke-width="1.1"/><line x1="759.2" y1="593.68" x2="761.5" y2="593.68" stroke="#111" stroke-width="1.1"/><line x1="90.9" y1="589.26" x2="96.0" y2="589.26" stroke="#111" stroke-width="1.1"/><line x1="759.2" y1="589.26" x2="761.5" y2="589.26" stroke="#111" stroke-width="1.1"/><line x1="90.9" y1="584.84" x2="96.0" y2="584.84" stroke="#111" stroke-width="1.1"/><line x1="759.2" y1="584.84" x2="761.5" y2="584.84" stroke="#111" stroke-width="1.1"/><line x1="90.9" y1="580.42" x2="96.0" y2="580.42" stroke="#111" stroke-width="1.1"/><line x1="759.2" y1="580.42" x2="761.5" y2="580.42" stroke="#111" stroke-width="1.1"/><line x1="88.2" y1="576.00" x2="97.9" y2="576.00" stroke="#111" stroke-width="1.3"/><line x1="757.5" y1="576.00" x2="761.5" y2="576.00" stroke="#111" stroke-width="1.3"/><line x1="90.9" y1="571.58" x2="96.0" y2="571.58" stroke="#111" stroke-width="1.1"/><line x1="759.2" y1="571.58" x2="761.5" y2="571.58" stroke="#111" stroke-width="1.1"/><line x1="90.9" y1="567.16" x2="96.0" y2="567.16" stroke="#111" stroke-width="1.1"/><line x1="759.2" y1="567.16" x2="761.5" y2="567.16" stroke="#111" stroke-width="1.1"/><line x1="90.9" y1="562.74" x2="96.0" y2="562.74" stroke="#111" stroke-width="1.1"/><line x1="759.2" y1="562.74" x2="761.5" y2="562.74" stroke="#111" stroke-width="1.1"/><line x1="90.9" y1="558.32" x2="96.0" y2="558.32" stroke="#111" stroke-width="1.1"/><line x1="759.2" y1="558.32" x2="761.5" y2="558.32" stroke="#111" stroke-width="1.1"/><line x1="88.2" y1="553.90" x2="97.9" y2="553.90" stroke="#111" stroke-width="1.3"/><line x1="757.5" y1="553.90" x2="761.5" y2="553.90" stroke="#111" stroke-width="1.3"/><line x1="90.9" y1="549.48" x2="96.0" y2="549.48" stroke="#111" stroke-width="1.1"/><line x1="759.2" y1="549.48" x2="761.5" y2="549.48" stroke="#111" stroke-width="1.1"/><line x1="90.9" y1="545.06" x2="96.0" y2="545.06" stroke="#111" stroke-width="1.1"/><line x1="759.2" y1="545.06" x2="761.5" y2="545.06" stroke="#111" stroke-width="1.1"/><line x1="90.9" y1="540.64" x2="96.0" y2="540.64" stroke="#111" stroke-width="1.1"/><line x1="759.2" y1="540.64" x2="761.5" y2="540.64" stroke="#111" stroke-width="1.1"/><line x1="90.9" y1="536.22" x2="96.0" y2="536.22" stroke="#111" stroke-width="1.1"/><line x1="759.2" y1="536.22" x2="761.5" y2="536.22" stroke="#111" stroke-width="1.1"/><line x1="88.2" y1="531.80" x2="97.9" y2="531.80" stroke="#111" stroke-width="1.3"/><line x1="757.5" y1="531.80" x2="761.5" y2="531.80" stroke="#111" stroke-width="1.3"/><line x1="90.9" y1="527.38" x2="96.0" y2="527.38" stroke="#111" stroke-width="1.1"/><line x1="759.2" y1="527.38" x2="761.5" y2="527.38" stroke="#111" stroke-width="1.1"/><line x1="90.9" y1="522.96" x2="96.0" y2="522.96" stroke="#111" stroke-width="1.1"/><line x1="759.2" y1="522.96" x2="761.5" y2="522.96" stroke="#111" stroke-width="1.1"/><line x1="90.9" y1="518.54" x2="96.0" y2="518.54" stroke="#111" stroke-width="1.1"/><line x1="759.2" y1="518.54" x2="761.5" y2="518.54" stroke="#111" stroke-width="1.1"/><line x1="90.9" y1="514.12" x2="96.0" y2="514.12" stroke="#111" stroke-width="1.1"/><line x1="759.2" y1="514.12" x2="761.5" y2="514.12" stroke="#111" stroke-width="1.1"/><line x1="88.2" y1="509.70" x2="97.9" y2="509.70" stroke="#111" stroke-width="1.3"/><line x1="757.5" y1="509.70" x2="761.5" y2="509.70" stroke="#111" stroke-width="1.3"/><line x1="90.9" y1="505.28" x2="96.0" y2="505.28" stroke="#111" stroke-width="1.1"/><line x1="759.2" y1="505.28" x2="761.5" y2="505.28" stroke="#111" stroke-width="1.1"/><line x1="90.9" y1="500.86" x2="96.0" y2="500.86" stroke="#111" stroke-width="1.1"/><line x1="759.2" y1="500.86" x2="761.5" y2="500.86" stroke="#111" stroke-width="1.1"/><line x1="90.9" y1="496.44" x2="96.0" y2="496.44" stroke="#111" stroke-width="1.1"/><line x1="759.2" y1="496.44" x2="761.5" y2="496.44" stroke="#111" stroke-width="1.1"/><line x1="90.9" y1="492.02" x2="96.0" y2="492.02" stroke="#111" stroke-width="1.1"/><line x1="759.2" y1="492.02" x2="761.5" y2="492.02" stroke="#111" stroke-width="1.1"/><line x1="88.2" y1="487.60" x2="97.9" y2="487.60" stroke="#111" stroke-width="1.3"/><line x1="757.5" y1="487.60" x2="761.5" y2="487.60" stroke="#111" stroke-width="1.3"/><line x1="90.9" y1="483.18" x2="96.0" y2="483.18" stroke="#111" stroke-width="1.1"/><line x1="759.2" y1="483.18" x2="761.5" y2="483.18" stroke="#111" stroke-width="1.1"/><line x1="90.9" y1="478.76" x2="96.0" y2="478.76" stroke="#111" stroke-width="1.1"/><line x1="759.2" y1="478.76" x2="761.5" y2="478.76" stroke="#111" stroke-width="1.1"/><line x1="90.9" y1="474.34" x2="96.0" y2="474.34" stroke="#111" stroke-width="1.1"/><line x1="759.2" y1="474.34" x2="761.5" y2="474.34" stroke="#111" stroke-width="1.1"/><line x1="90.9" y1="469.92" x2="96.0" y2="469.92" stroke="#111" stroke-width="1.1"/><line x1="759.2" y1="469.92" x2="761.5" y2="469.92" stroke="#111" stroke-width="1.1"/><line x1="88.2" y1="465.50" x2="97.9" y2="465.50" stroke="#111" stroke-width="1.3"/><line x1="757.5" y1="465.50" x2="761.5" y2="465.50" stroke="#111" stroke-width="1.3"/><line x1="90.9" y1="461.08" x2="96.0" y2="461.08" stroke="#111" stroke-width="1.1"/><line x1="759.2" y1="461.08" x2="761.5" y2="461.08" stroke="#111" stroke-width="1.1"/><line x1="90.9" y1="456.66" x2="96.0" y2="456.66" stroke="#111" stroke-width="1.1"/><line x1="759.2" y1="456.66" x2="761.5" y2="456.66" stroke="#111" stroke-width="1.1"/><line x1="90.9" y1="452.24" x2="96.0" y2="452.24" stroke="#111" stroke-width="1.1"/><line x1="759.2" y1="452.24" x2="761.5" y2="452.24" stroke="#111" stroke-width="1.1"/><line x1="90.9" y1="447.82" x2="96.0" y2="447.82" stroke="#111" stroke-width="1.1"/><line x1="759.2" y1="447.82" x2="761.5" y2="447.82" stroke="#111" stroke-width="1.1"/><line x1="88.2" y1="443.40" x2="97.9" y2="443.40" stroke="#111" stroke-width="1.3"/><line x1="757.5" y1="443.40" x2="761.5" y2="443.40" stroke="#111" stroke-width="1.3"/><line x1="90.9" y1="438.98" x2="96.0" y2="438.98" stroke="#111" stroke-width="1.1"/><line x1="759.2" y1="438.98" x2="761.5" y2="438.98" stroke="#111" stroke-width="1.1"/><line x1="90.9" y1="434.56" x2="96.0" y2="434.56" stroke="#111" stroke-width="1.1"/><line x1="759.2" y1="434.56" x2="761.5" y2="434.56" stroke="#111" stroke-width="1.1"/><line x1="90.9" y1="430.14" x2="96.0" y2="430.14" stroke="#111" stroke-width="1.1"/><line x1="759.2" y1="430.14" x2="761.5" y2="430.14" stroke="#111" stroke-width="1.1"/><line x1="90.9" y1="425.72" x2="96.0" y2="425.72" stroke="#111" stroke-width="1.1"/><line x1="759.2" y1="425.72" x2="761.5" y2="425.72" stroke="#111" stroke-width="1.1"/><line x1="88.2" y1="421.30" x2="97.9" y2="421.30" stroke="#111" stroke-width="1.3"/><line x1="757.5" y1="421.30" x2="761.5" y2="421.30" stroke="#111" stroke-width="1.3"/><line x1="90.9" y1="416.88" x2="96.0" y2="416.88" stroke="#111" stroke-width="1.1"/><line x1="759.2" y1="416.88" x2="761.5" y2="416.88" stroke="#111" stroke-width="1.1"/><line x1="90.9" y1="412.46" x2="96.0" y2="412.46" stroke="#111" stroke-width="1.1"/><line x1="759.2" y1="412.46" x2="761.5" y2="412.46" stroke="#111" stroke-width="1.1"/><line x1="90.9" y1="408.04" x2="96.0" y2="408.04" stroke="#111" stroke-width="1.1"/><line x1="759.2" y1="408.04" x2="761.5" y2="408.04" stroke="#111" stroke-width="1.1"/><line x1="90.9" y1="403.62" x2="96.0" y2="403.62" stroke="#111" stroke-width="1.1"/><line x1="759.2" y1="403.62" x2="761.5" y2="403.62" stroke="#111" stroke-width="1.1"/><line x1="88.2" y1="399.20" x2="97.9" y2="399.20" stroke="#111" stroke-width="1.3"/><line x1="757.5" y1="399.20" x2="761.5" y2="399.20" stroke="#111" stroke-width="1.3"/><line x1="90.9" y1="394.78" x2="96.0" y2="394.78" stroke="#111" stroke-width="1.1"/><line x1="759.2" y1="394.78" x2="761.5" y2="394.78" stroke="#111" stroke-width="1.1"/><line x1="90.9" y1="390.36" x2="96.0" y2="390.36" stroke="#111" stroke-width="1.1"/><line x1="759.2" y1="390.36" x2="761.5" y2="390.36" stroke="#111" stroke-width="1.1"/><line x1="90.9" y1="385.94" x2="96.0" y2="385.94" stroke="#111" stroke-width="1.1"/><line x1="759.2" y1="385.94" x2="761.5" y2="385.94" stroke="#111" stroke-width="1.1"/><line x1="90.9" y1="381.52" x2="96.0" y2="381.52" stroke="#111" stroke-width="1.1"/><line x1="759.2" y1="381.52" x2="761.5" y2="381.52" stroke="#111" stroke-width="1.1"/><line x1="88.2" y1="377.10" x2="97.9" y2="377.10" stroke="#111" stroke-width="1.3"/><line x1="757.5" y1="377.10" x2="761.5" y2="377.10" stroke="#111" stroke-width="1.3"/><line x1="90.9" y1="372.68" x2="96.0" y2="372.68" stroke="#111" stroke-width="1.1"/><line x1="759.2" y1="372.68" x2="761.5" y2="372.68" stroke="#111" stroke-width="1.1"/><line x1="90.9" y1="368.26" x2="96.0" y2="368.26" stroke="#111" stroke-width="1.1"/><line x1="759.2" y1="368.26" x2="761.5" y2="368.26" stroke="#111" stroke-width="1.1"/><line x1="90.9" y1="363.84" x2="96.0" y2="363.84" stroke="#111" stroke-width="1.1"/><line x1="759.2" y1="363.84" x2="761.5" y2="363.84" stroke="#111" stroke-width="1.1"/><line x1="90.9" y1="359.42" x2="96.0" y2="359.42" stroke="#111" stroke-width="1.1"/><line x1="759.2" y1="359.42" x2="761.5" y2="359.42" stroke="#111" stroke-width="1.1"/><line x1="88.2" y1="355.00" x2="97.9" y2="355.00" stroke="#111" stroke-width="1.3"/><line x1="757.5" y1="355.00" x2="761.5" y2="355.00" stroke="#111" stroke-width="1.3"/><line x1="90.9" y1="350.58" x2="96.0" y2="350.58" stroke="#111" stroke-width="1.1"/><line x1="759.2" y1="350.58" x2="761.5" y2="350.58" stroke="#111" stroke-width="1.1"/><line x1="90.9" y1="346.16" x2="96.0" y2="346.16" stroke="#111" stroke-width="1.1"/><line x1="759.2" y1="346.16" x2="761.5" y2="346.16" stroke="#111" stroke-width="1.1"/><line x1="90.9" y1="341.74" x2="96.0" y2="341.74" stroke="#111" stroke-width="1.1"/><line x1="759.2" y1="341.74" x2="761.5" y2="341.74" stroke="#111" stroke-width="1.1"/><line x1="90.9" y1="337.32" x2="96.0" y2="337.32" stroke="#111" stroke-width="1.1"/><line x1="759.2" y1="337.32" x2="761.5" y2="337.32" stroke="#111" stroke-width="1.1"/><line x1="88.2" y1="332.90" x2="97.9" y2="332.90" stroke="#111" stroke-width="1.3"/><line x1="757.5" y1="332.90" x2="761.5" y2="332.90" stroke="#111" stroke-width="1.3"/><line x1="90.9" y1="328.48" x2="96.0" y2="328.48" stroke="#111" stroke-width="1.1"/><line x1="759.2" y1="328.48" x2="761.5" y2="328.48" stroke="#111" stroke-width="1.1"/><line x1="90.9" y1="324.06" x2="96.0" y2="324.06" stroke="#111" stroke-width="1.1"/><line x1="759.2" y1="324.06" x2="761.5" y2="324.06" stroke="#111" stroke-width="1.1"/><line x1="90.9" y1="319.64" x2="96.0" y2="319.64" stroke="#111" stroke-width="1.1"/><line x1="759.2" y1="319.64" x2="761.5" y2="319.64" stroke="#111" stroke-width="1.1"/><line x1="90.9" y1="315.22" x2="96.0" y2="315.22" stroke="#111" stroke-width="1.1"/><line x1="759.2" y1="315.22" x2="761.5" y2="315.22" stroke="#111" stroke-width="1.1"/><line x1="88.2" y1="310.80" x2="97.9" y2="310.80" stroke="#111" stroke-width="1.3"/><line x1="757.5" y1="310.80" x2="761.5" y2="310.80" stroke="#111" stroke-width="1.3"/><line x1="90.9" y1="306.38" x2="96.0" y2="306.38" stroke="#111" stroke-width="1.1"/><line x1="759.2" y1="306.38" x2="761.5" y2="306.38" stroke="#111" stroke-width="1.1"/><line x1="90.9" y1="301.96" x2="96.0" y2="301.96" stroke="#111" stroke-width="1.1"/><line x1="759.2" y1="301.96" x2="761.5" y2="301.96" stroke="#111" stroke-width="1.1"/><line x1="90.9" y1="297.54" x2="96.0" y2="297.54" stroke="#111" stroke-width="1.1"/><line x1="759.2" y1="297.54" x2="761.5" y2="297.54" stroke="#111" stroke-width="1.1"/><line x1="90.9" y1="293.12" x2="96.0" y2="293.12" stroke="#111" stroke-width="1.1"/><line x1="759.2" y1="293.12" x2="761.5" y2="293.12" stroke="#111" stroke-width="1.1"/><line x1="88.2" y1="288.70" x2="97.9" y2="288.70" stroke="#111" stroke-width="1.3"/><line x1="757.5" y1="288.70" x2="761.5" y2="288.70" stroke="#111" stroke-width="1.3"/><line x1="90.9" y1="284.28" x2="96.0" y2="284.28" stroke="#111" stroke-width="1.1"/><line x1="759.2" y1="284.28" x2="761.5" y2="284.28" stroke="#111" stroke-width="1.1"/><line x1="90.9" y1="279.86" x2="96.0" y2="279.86" stroke="#111" stroke-width="1.1"/><line x1="759.2" y1="279.86" x2="761.5" y2="279.86" stroke="#111" stroke-width="1.1"/><line x1="90.9" y1="275.44" x2="96.0" y2="275.44" stroke="#111" stroke-width="1.1"/><line x1="759.2" y1="275.44" x2="761.5" y2="275.44" stroke="#111" stroke-width="1.1"/><line x1="90.9" y1="271.02" x2="96.0" y2="271.02" stroke="#111" stroke-width="1.1"/><line x1="759.2" y1="271.02" x2="761.5" y2="271.02" stroke="#111" stroke-width="1.1"/><line x1="88.2" y1="266.60" x2="97.9" y2="266.60" stroke="#111" stroke-width="1.3"/><line x1="757.5" y1="266.60" x2="761.5" y2="266.60" stroke="#111" stroke-width="1.3"/><line x1="90.9" y1="262.18" x2="96.0" y2="262.18" stroke="#111" stroke-width="1.1"/><line x1="759.2" y1="262.18" x2="761.5" y2="262.18" stroke="#111" stroke-width="1.1"/><line x1="90.9" y1="257.76" x2="96.0" y2="257.76" stroke="#111" stroke-width="1.1"/><line x1="759.2" y1="257.76" x2="761.5" y2="257.76" stroke="#111" stroke-width="1.1"/><line x1="90.9" y1="253.34" x2="96.0" y2="253.34" stroke="#111" stroke-width="1.1"/><line x1="759.2" y1="253.34" x2="761.5" y2="253.34" stroke="#111" stroke-width="1.1"/><line x1="90.9" y1="248.92" x2="96.0" y2="248.92" stroke="#111" stroke-width="1.1"/><line x1="759.2" y1="248.92" x2="761.5" y2="248.92" stroke="#111" stroke-width="1.1"/><line x1="88.2" y1="244.50" x2="97.9" y2="244.50" stroke="#111" stroke-width="1.3"/><line x1="757.5" y1="244.50" x2="761.5" y2="244.50" stroke="#111" stroke-width="1.3"/><line x1="90.9" y1="240.08" x2="96.0" y2="240.08" stroke="#111" stroke-width="1.1"/><line x1="759.2" y1="240.08" x2="761.5" y2="240.08" stroke="#111" stroke-width="1.1"/><line x1="90.9" y1="235.66" x2="96.0" y2="235.66" stroke="#111" stroke-width="1.1"/><line x1="759.2" y1="235.66" x2="761.5" y2="235.66" stroke="#111" stroke-width="1.1"/><line x1="90.9" y1="231.24" x2="96.0" y2="231.24" stroke="#111" stroke-width="1.1"/><line x1="759.2" y1="231.24" x2="761.5" y2="231.24" stroke="#111" stroke-width="1.1"/><line x1="90.9" y1="226.82" x2="96.0" y2="226.82" stroke="#111" stroke-width="1.1"/><line x1="759.2" y1="226.82" x2="761.5" y2="226.82" stroke="#111" stroke-width="1.1"/><line x1="88.2" y1="222.40" x2="97.9" y2="222.40" stroke="#111" stroke-width="1.3"/><line x1="757.5" y1="222.40" x2="761.5" y2="222.40" stroke="#111" stroke-width="1.3"/><line x1="99.70" y1="705.3" x2="99.70" y2="712.4" stroke="#111" stroke-width="1.1"/><line x1="99.70" y1="222.4" x2="99.70" y2="226.7" stroke="#111" stroke-width="1.1"/><line x1="113.08" y1="705.3" x2="113.08" y2="712.4" stroke="#111" stroke-width="1.1"/><line x1="113.08" y1="222.4" x2="113.08" y2="226.7" stroke="#111" stroke-width="1.1"/><line x1="126.47" y1="705.3" x2="126.47" y2="712.4" stroke="#111" stroke-width="1.1"/><line x1="126.47" y1="222.4" x2="126.47" y2="226.7" stroke="#111" stroke-width="1.1"/><line x1="139.85" y1="705.3" x2="139.85" y2="712.4" stroke="#111" stroke-width="1.1"/><line x1="139.85" y1="222.4" x2="139.85" y2="226.7" stroke="#111" stroke-width="1.1"/><line x1="153.24" y1="702.3" x2="153.24" y2="715" stroke="#111" stroke-width="1.3"/><line x1="153.24" y1="222.4" x2="153.24" y2="230" stroke="#111" stroke-width="1.3"/><line x1="166.62" y1="705.3" x2="166.62" y2="712.4" stroke="#111" stroke-width="1.1"/><line x1="166.62" y1="222.4" x2="166.62" y2="226.7" stroke="#111" stroke-width="1.1"/><line x1="180.00" y1="705.3" x2="180.00" y2="712.4" stroke="#111" stroke-width="1.1"/><line x1="180.00" y1="222.4" x2="180.00" y2="226.7" stroke="#111" stroke-width="1.1"/><line x1="193.39" y1="705.3" x2="193.39" y2="712.4" stroke="#111" stroke-width="1.1"/><line x1="193.39" y1="222.4" x2="193.39" y2="226.7" stroke="#111" stroke-width="1.1"/><line x1="206.77" y1="705.3" x2="206.77" y2="712.4" stroke="#111" stroke-width="1.1"/><line x1="206.77" y1="222.4" x2="206.77" y2="226.7" stroke="#111" stroke-width="1.1"/><line x1="220.16" y1="702.3" x2="220.16" y2="715" stroke="#111" stroke-width="1.3"/><line x1="220.16" y1="222.4" x2="220.16" y2="230" stroke="#111" stroke-width="1.3"/><line x1="233.54" y1="705.3" x2="233.54" y2="712.4" stroke="#111" stroke-width="1.1"/><line x1="233.54" y1="222.4" x2="233.54" y2="226.7" stroke="#111" stroke-width="1.1"/><line x1="246.92" y1="705.3" x2="246.92" y2="712.4" stroke="#111" stroke-width="1.1"/><line x1="246.92" y1="222.4" x2="246.92" y2="226.7" stroke="#111" stroke-width="1.1"/><line x1="260.31" y1="705.3" x2="260.31" y2="712.4" stroke="#111" stroke-width="1.1"/><line x1="260.31" y1="222.4" x2="260.31" y2="226.7" stroke="#111" stroke-width="1.1"/><line x1="273.69" y1="705.3" x2="273.69" y2="712.4" stroke="#111" stroke-width="1.1"/><line x1="273.69" y1="222.4" x2="273.69" y2="226.7" stroke="#111" stroke-width="1.1"/><line x1="287.08" y1="702.3" x2="287.08" y2="715" stroke="#111" stroke-width="1.3"/><line x1="287.08" y1="222.4" x2="287.08" y2="230" stroke="#111" stroke-width="1.3"/><line x1="300.46" y1="705.3" x2="300.46" y2="712.4" stroke="#111" stroke-width="1.1"/><line x1="300.46" y1="222.4" x2="300.46" y2="226.7" stroke="#111" stroke-width="1.1"/><line x1="313.84" y1="705.3" x2="313.84" y2="712.4" stroke="#111" stroke-width="1.1"/><line x1="313.84" y1="222.4" x2="313.84" y2="226.7" stroke="#111" stroke-width="1.1"/><line x1="327.23" y1="705.3" x2="327.23" y2="712.4" stroke="#111" stroke-width="1.1"/><line x1="327.23" y1="222.4" x2="327.23" y2="226.7" stroke="#111" stroke-width="1.1"/><line x1="340.61" y1="705.3" x2="340.61" y2="712.4" stroke="#111" stroke-width="1.1"/><line x1="340.61" y1="222.4" x2="340.61" y2="226.7" stroke="#111" stroke-width="1.1"/><line x1="354.00" y1="702.3" x2="354.00" y2="715" stroke="#111" stroke-width="1.3"/><line x1="354.00" y1="222.4" x2="354.00" y2="230" stroke="#111" stroke-width="1.3"/><line x1="367.38" y1="705.3" x2="367.38" y2="712.4" stroke="#111" stroke-width="1.1"/><line x1="367.38" y1="222.4" x2="367.38" y2="226.7" stroke="#111" stroke-width="1.1"/><line x1="380.76" y1="705.3" x2="380.76" y2="712.4" stroke="#111" stroke-width="1.1"/><line x1="380.76" y1="222.4" x2="380.76" y2="226.7" stroke="#111" stroke-width="1.1"/><line x1="394.15" y1="705.3" x2="394.15" y2="712.4" stroke="#111" stroke-width="1.1"/><line x1="394.15" y1="222.4" x2="394.15" y2="226.7" stroke="#111" stroke-width="1.1"/><line x1="407.53" y1="705.3" x2="407.53" y2="712.4" stroke="#111" stroke-width="1.1"/><line x1="407.53" y1="222.4" x2="407.53" y2="226.7" stroke="#111" stroke-width="1.1"/><line x1="420.92" y1="702.3" x2="420.92" y2="715" stroke="#111" stroke-width="1.3"/><line x1="420.92" y1="222.4" x2="420.92" y2="230" stroke="#111" stroke-width="1.3"/><line x1="434.30" y1="705.3" x2="434.30" y2="712.4" stroke="#111" stroke-width="1.1"/><line x1="434.30" y1="222.4" x2="434.30" y2="226.7" stroke="#111" stroke-width="1.1"/><line x1="447.68" y1="705.3" x2="447.68" y2="712.4" stroke="#111" stroke-width="1.1"/><line x1="447.68" y1="222.4" x2="447.68" y2="226.7" stroke="#111" stroke-width="1.1"/><line x1="461.07" y1="705.3" x2="461.07" y2="712.4" stroke="#111" stroke-width="1.1"/><line x1="461.07" y1="222.4" x2="461.07" y2="226.7" stroke="#111" stroke-width="1.1"/><line x1="474.45" y1="705.3" x2="474.45" y2="712.4" stroke="#111" stroke-width="1.1"/><line x1="474.45" y1="222.4" x2="474.45" y2="226.7" stroke="#111" stroke-width="1.1"/><line x1="487.84" y1="702.3" x2="487.84" y2="715" stroke="#111" stroke-width="1.3"/><line x1="487.84" y1="222.4" x2="487.84" y2="230" stroke="#111" stroke-width="1.3"/><line x1="501.22" y1="705.3" x2="501.22" y2="712.4" stroke="#111" stroke-width="1.1"/><line x1="501.22" y1="222.4" x2="501.22" y2="226.7" stroke="#111" stroke-width="1.1"/><line x1="514.60" y1="705.3" x2="514.60" y2="712.4" stroke="#111" stroke-width="1.1"/><line x1="514.60" y1="222.4" x2="514.60" y2="226.7" stroke="#111" stroke-width="1.1"/><line x1="527.99" y1="705.3" x2="527.99" y2="712.4" stroke="#111" stroke-width="1.1"/><line x1="527.99" y1="222.4" x2="527.99" y2="226.7" stroke="#111" stroke-width="1.1"/><line x1="541.37" y1="705.3" x2="541.37" y2="712.4" stroke="#111" stroke-width="1.1"/><line x1="541.37" y1="222.4" x2="541.37" y2="226.7" stroke="#111" stroke-width="1.1"/><line x1="554.76" y1="702.3" x2="554.76" y2="715" stroke="#111" stroke-width="1.3"/><line x1="554.76" y1="222.4" x2="554.76" y2="230" stroke="#111" stroke-width="1.3"/><line x1="568.14" y1="705.3" x2="568.14" y2="712.4" stroke="#111" stroke-width="1.1"/><line x1="568.14" y1="222.4" x2="568.14" y2="226.7" stroke="#111" stroke-width="1.1"/><line x1="581.52" y1="705.3" x2="581.52" y2="712.4" stroke="#111" stroke-width="1.1"/><line x1="581.52" y1="222.4" x2="581.52" y2="226.7" stroke="#111" stroke-width="1.1"/><line x1="594.91" y1="705.3" x2="594.91" y2="712.4" stroke="#111" stroke-width="1.1"/><line x1="594.91" y1="222.4" x2="594.91" y2="226.7" stroke="#111" stroke-width="1.1"/><line x1="608.29" y1="705.3" x2="608.29" y2="712.4" stroke="#111" stroke-width="1.1"/><line x1="608.29" y1="222.4" x2="608.29" y2="226.7" stroke="#111" stroke-width="1.1"/><line x1="621.68" y1="702.3" x2="621.68" y2="715" stroke="#111" stroke-width="1.3"/><line x1="621.68" y1="222.4" x2="621.68" y2="230" stroke="#111" stroke-width="1.3"/><line x1="635.06" y1="705.3" x2="635.06" y2="712.4" stroke="#111" stroke-width="1.1"/><line x1="635.06" y1="222.4" x2="635.06" y2="226.7" stroke="#111" stroke-width="1.1"/><line x1="648.44" y1="705.3" x2="648.44" y2="712.4" stroke="#111" stroke-width="1.1"/><line x1="648.44" y1="222.4" x2="648.44" y2="226.7" stroke="#111" stroke-width="1.1"/><line x1="661.83" y1="705.3" x2="661.83" y2="712.4" stroke="#111" stroke-width="1.1"/><line x1="661.83" y1="222.4" x2="661.83" y2="226.7" stroke="#111" stroke-width="1.1"/><line x1="675.21" y1="705.3" x2="675.21" y2="712.4" stroke="#111" stroke-width="1.1"/><line x1="675.21" y1="222.4" x2="675.21" y2="226.7" stroke="#111" stroke-width="1.1"/><line x1="688.60" y1="702.3" x2="688.60" y2="715" stroke="#111" stroke-width="1.3"/><line x1="688.60" y1="222.4" x2="688.60" y2="230" stroke="#111" stroke-width="1.3"/><line x1="701.98" y1="705.3" x2="701.98" y2="712.4" stroke="#111" stroke-width="1.1"/><line x1="701.98" y1="222.4" x2="701.98" y2="226.7" stroke="#111" stroke-width="1.1"/><line x1="715.36" y1="705.3" x2="715.36" y2="712.4" stroke="#111" stroke-width="1.1"/><line x1="715.36" y1="222.4" x2="715.36" y2="226.7" stroke="#111" stroke-width="1.1"/><line x1="728.75" y1="705.3" x2="728.75" y2="712.4" stroke="#111" stroke-width="1.1"/><line x1="728.75" y1="222.4" x2="728.75" y2="226.7" stroke="#111" stroke-width="1.1"/><line x1="742.13" y1="705.3" x2="742.13" y2="712.4" stroke="#111" stroke-width="1.1"/><line x1="742.13" y1="222.4" x2="742.13" y2="226.7" stroke="#111" stroke-width="1.1"/><line x1="755.52" y1="702.3" x2="755.52" y2="715" stroke="#111" stroke-width="1.3"/><line x1="755.52" y1="222.4" x2="755.52" y2="230" stroke="#111" stroke-width="1.3"/><line x1="94.6" y1="266.1" x2="760.5" y2="266.1" stroke="#0a14e6" stroke-width="1.3"/><polyline points="94.5,509.8 98.0,509.8 105.6,505.0 213.2,505.0 219.7,509.8 226.0,505.0 247.2,505.0 253.7,509.8 267.0,509.8 273.6,505.0 334.2,505.0 340.7,509.8 353.5,509.8 360.0,505.0 374.0,505.0 380.4,509.8 387.5,509.8 393.7,505.0 400.2,509.8 407.3,509.8 413.8,505.0 460.2,505.0 467.5,509.8 474.0,505.0 554.7,505.0 561.4,509.8 567.2,509.8 580.3,500.6 587.6,500.6 588.2,505.0 648.3,505.0 654.7,509.8 688.2,509.8 695.0,505.0 715.0,505.0 721.7,509.8 727.6,509.8 728.5,505.0 760.5,505.0" fill="none" stroke="#2cf42c" stroke-width="2" stroke-linejoin="round"/><polyline points="94.5,668.6 96.0,667.3 103.0,667.3 104.0,668.6 115.0,668.6 116.0,667.3 250.0,667.3 251.0,668.6 270.0,668.6 272.0,667.3 276.0,667.3 277.5,668.6 290.0,668.6 291.0,667.3 296.0,667.3 297.5,668.6 310.0,668.6 311.0,667.3 350.0,667.3 351.0,668.6 370.0,668.6 371.0,667.3 374.0,667.3 375.0,668.6 385.0,668.6 386.0,667.3 391.0,667.3 392.0,668.6 403.0,668.6 404.0,667.3 467.0,667.3 468.0,668.6 470.0,667.3 558.0,667.3 559.0,668.6 570.0,668.6 571.0,667.3 645.0,667.3 646.0,668.6 670.0,668.6 671.0,667.3 684.0,667.3 685.0,668.6 690.0,668.6 692.0,667.3 696.0,667.3 698.0,668.6 710.0,668.6 712.0,667.3 760.5,667.3" fill="none" stroke="#ff10ff" stroke-width="1.9"/></svg>
<div class="t" style="left:67.70px;top:696.96px;font-size:20.00px;line-height:20.00px;color:#000;transform:scaleX(0.6486);transform-origin:0 0;-webkit-text-stroke:0.30px #000;">0</div>
<div class="t" style="left:64.15px;top:652.76px;font-size:20.00px;line-height:20.00px;color:#000;transform:scaleX(0.6441);transform-origin:0 0;-webkit-text-stroke:0.30px #000;">10</div>
<div class="t" style="left:64.15px;top:608.56px;font-size:20.00px;line-height:20.00px;color:#000;transform:scaleX(0.6441);transform-origin:0 0;-webkit-text-stroke:0.30px #000;">20</div>
<div class="t" style="left:64.15px;top:564.36px;font-size:20.00px;line-height:20.00px;color:#000;transform:scaleX(0.6441);transform-origin:0 0;-webkit-text-stroke:0.30px #000;">30</div>
<div class="t" style="left:64.15px;top:520.16px;font-size:20.00px;line-height:20.00px;color:#000;transform:scaleX(0.6441);transform-origin:0 0;-webkit-text-stroke:0.30px #000;">40</div>
<div class="t" style="left:64.15px;top:475.96px;font-size:20.00px;line-height:20.00px;color:#000;transform:scaleX(0.6441);transform-origin:0 0;-webkit-text-stroke:0.30px #000;">50</div>
<div class="t" style="left:64.15px;top:431.76px;font-size:20.00px;line-height:20.00px;color:#000;transform:scaleX(0.6441);transform-origin:0 0;-webkit-text-stroke:0.30px #000;">60</div>
<div class="t" style="left:64.15px;top:387.56px;font-size:20.00px;line-height:20.00px;color:#000;transform:scaleX(0.6441);transform-origin:0 0;-webkit-text-stroke:0.30px #000;">70</div>
<div class="t" style="left:64.15px;top:343.36px;font-size:20.00px;line-height:20.00px;color:#000;transform:scaleX(0.6441);transform-origin:0 0;-webkit-text-stroke:0.30px #000;">80</div>
<div class="t" style="left:64.15px;top:299.16px;font-size:20.00px;line-height:20.00px;color:#000;transform:scaleX(0.6441);transform-origin:0 0;-webkit-text-stroke:0.30px #000;">90</div>
<div class="t" style="left:61.55px;top:254.96px;font-size:20.00px;line-height:20.00px;color:#000;transform:scaleX(0.5838);transform-origin:0 0;-webkit-text-stroke:0.30px #000;">100</div>
<div class="t" style="left:61.55px;top:210.76px;font-size:20.00px;line-height:20.00px;color:#000;transform:scaleX(0.6113);transform-origin:0 0;-webkit-text-stroke:0.30px #000;">110</div>
<div style="position:absolute;left:772.00px;top:175.70px;width:127.30px;height:514.30px;border:1px solid #dcdcdc;"></div>
<div style="position:absolute;left:776.00px;top:170.00px;width:64.00px;height:12.00px;background:#f3f3f3;"></div>
<div class="t" style="left:778.00px;top:169.67px;font-size:12.20px;line-height:12.20px;color:#2020d0;transform:scaleX(0.6334);transform-origin:0 0;-webkit-text-stroke:0.30px #2020d0;">Transponder [BS]</div>
<div class="t" style="left:778.00px;top:194.37px;font-size:12.20px;line-height:12.20px;color:#111;font-weight:bold;transform:scaleX(0.6079);transform-origin:0 0;-webkit-text-stroke:0.30px #111;">Frequency:</div>
<div class="t" style="left:834.00px;top:194.37px;font-size:12.20px;line-height:12.20px;color:#222;transform:scaleX(0.6406);transform-origin:0 0;-webkit-text-stroke:0.30px #222;">11139,470 MHz</div>
<div class="t" style="left:778.00px;top:220.49px;font-size:12.20px;line-height:12.20px;color:#111;font-weight:bold;transform:scaleX(0.6189);transform-origin:0 0;-webkit-text-stroke:0.30px #111;">Polarization:</div>
<div class="t" style="left:834.00px;top:220.49px;font-size:12.20px;line-height:12.20px;color:#222;transform:scaleX(0.6325);transform-origin:0 0;-webkit-text-stroke:0.30px #222;">Vertical</div>
<div class="t" style="left:778.00px;top:246.62px;font-size:12.20px;line-height:12.20px;color:#111;font-weight:bold;transform:scaleX(0.6103);transform-origin:0 0;-webkit-text-stroke:0.30px #111;">Symbol Rate:</div>
<div class="t" style="left:834.00px;top:246.62px;font-size:12.20px;line-height:12.20px;color:#222;transform:scaleX(0.6037);transform-origin:0 0;-webkit-text-stroke:0.30px #222;">10999,977 KS/s</div>
<div class="t" style="left:778.00px;top:272.74px;font-size:12.20px;line-height:12.20px;color:#111;font-weight:bold;transform:scaleX(0.6151);transform-origin:0 0;-webkit-text-stroke:0.30px #111;">Standard:</div>
<div class="t" style="left:834.00px;top:272.74px;font-size:12.20px;line-height:12.20px;color:#222;transform:scaleX(0.5760);transform-origin:0 0;-webkit-text-stroke:0.30px #222;">DVB-S2</div>
<div class="t" style="left:778.00px;top:298.87px;font-size:12.20px;line-height:12.20px;color:#111;font-weight:bold;transform:scaleX(0.6599);transform-origin:0 0;-webkit-text-stroke:0.30px #111;">Modulation:</div>
<div class="t" style="left:834.00px;top:298.87px;font-size:12.20px;line-height:12.20px;color:#222;transform:scaleX(0.5310);transform-origin:0 0;-webkit-text-stroke:0.30px #222;">QPSK</div>
<div class="t" style="left:778.00px;top:324.99px;font-size:12.20px;line-height:12.20px;color:#111;font-weight:bold;transform:scaleX(0.5579);transform-origin:0 0;-webkit-text-stroke:0.30px #111;">FEC:</div>
<div class="t" style="left:834.00px;top:324.99px;font-size:12.20px;line-height:12.20px;color:#222;transform:scaleX(0.6353);transform-origin:0 0;-webkit-text-stroke:0.30px #222;">2/3</div>
<div class="t" style="left:778.00px;top:351.12px;font-size:12.20px;line-height:12.20px;color:#111;font-weight:bold;transform:scaleX(0.6242);transform-origin:0 0;-webkit-text-stroke:0.30px #111;">RollOff:</div>
<div class="t" style="left:834.00px;top:351.12px;font-size:12.20px;line-height:12.20px;color:#222;transform:scaleX(0.6118);transform-origin:0 0;-webkit-text-stroke:0.30px #222;">0.35</div>
<div class="t" style="left:778.00px;top:377.24px;font-size:12.20px;line-height:12.20px;color:#111;font-weight:bold;transform:scaleX(0.6328);transform-origin:0 0;-webkit-text-stroke:0.30px #111;">Pilot:</div>
<div class="t" style="left:834.00px;top:377.24px;font-size:12.20px;line-height:12.20px;color:#222;transform:scaleX(0.5943);transform-origin:0 0;-webkit-text-stroke:0.30px #222;">OFF</div>
<div class="t" style="left:778.00px;top:403.37px;font-size:12.20px;line-height:12.20px;color:#111;font-weight:bold;transform:scaleX(0.6086);transform-origin:0 0;-webkit-text-stroke:0.30px #111;">Spectrum:</div>
<div class="t" style="left:834.00px;top:403.37px;font-size:12.20px;line-height:12.20px;color:#222;transform:scaleX(0.6489);transform-origin:0 0;-webkit-text-stroke:0.30px #222;">Normal</div>
<div class="t" style="left:778.00px;top:429.49px;font-size:12.20px;line-height:12.20px;color:#111;font-weight:bold;transform:scaleX(0.6159);transform-origin:0 0;-webkit-text-stroke:0.30px #111;">Frame Type:</div>
<div class="t" style="left:834.00px;top:429.49px;font-size:12.20px;line-height:12.20px;color:#222;transform:scaleX(0.6313);transform-origin:0 0;-webkit-text-stroke:0.30px #222;">Short Frame</div>
<div class="t" style="left:778.00px;top:455.62px;font-size:12.20px;line-height:12.20px;color:#111;font-weight:bold;transform:scaleX(0.6476);transform-origin:0 0;-webkit-text-stroke:0.30px #111;">Code Mode:</div>
<div class="t" style="left:834.00px;top:455.62px;font-size:12.20px;line-height:12.20px;color:#222;transform:scaleX(0.6162);transform-origin:0 0;-webkit-text-stroke:0.30px #222;">ACM</div>
<div class="t" style="left:778.00px;top:481.74px;font-size:12.20px;line-height:12.20px;color:#111;font-weight:bold;transform:scaleX(0.6225);transform-origin:0 0;-webkit-text-stroke:0.30px #111;">Stream type:</div>
<div class="t" style="left:834.00px;top:481.74px;font-size:12.20px;line-height:12.20px;color:#222;transform:scaleX(0.6831);transform-origin:0 0;-webkit-text-stroke:0.30px #222;">Continous</div>
<div class="t" style="left:778.00px;top:507.87px;font-size:12.20px;line-height:12.20px;color:#111;font-weight:bold;transform:scaleX(0.5609);transform-origin:0 0;-webkit-text-stroke:0.30px #111;">ISSYI</div>
<div class="t" style="left:834.00px;top:507.87px;font-size:12.20px;line-height:12.20px;color:#222;transform:scaleX(0.5943);transform-origin:0 0;-webkit-text-stroke:0.30px #222;">OFF</div>
<div class="t" style="left:778.00px;top:533.99px;font-size:12.20px;line-height:12.20px;color:#111;font-weight:bold;transform:scaleX(0.6477);transform-origin:0 0;-webkit-text-stroke:0.30px #111;">NPD:</div>
<div class="t" style="left:834.00px;top:533.99px;font-size:12.20px;line-height:12.20px;color:#222;transform:scaleX(0.5943);transform-origin:0 0;-webkit-text-stroke:0.30px #222;">OFF</div>
<div class="t" style="left:778.00px;top:560.12px;font-size:12.20px;line-height:12.20px;color:#111;font-weight:bold;transform:scaleX(0.5956);transform-origin:0 0;-webkit-text-stroke:0.30px #111;">RF Level:</div>
<div class="t" style="left:834.00px;top:560.12px;font-size:12.20px;line-height:12.20px;color:#222;transform:scaleX(0.6095);transform-origin:0 0;-webkit-text-stroke:0.30px #222;">-54 dBm</div>
<div class="t" style="left:778.00px;top:586.24px;font-size:12.20px;line-height:12.20px;color:#111;font-weight:bold;transform:scaleX(0.6004);transform-origin:0 0;-webkit-text-stroke:0.30px #111;">BitRate:</div>
<div class="t" style="left:834.00px;top:586.24px;font-size:12.20px;line-height:12.20px;color:#222;transform:scaleX(0.6571);transform-origin:0 0;-webkit-text-stroke:0.30px #222;">14,552 Mbit/s</div>
<div class="t" style="left:778.00px;top:612.37px;font-size:12.20px;line-height:12.20px;color:#111;font-weight:bold;transform:scaleX(0.6260);transform-origin:0 0;-webkit-text-stroke:0.30px #111;">CarrierWidth:</div>
<div class="t" style="left:834.00px;top:612.37px;font-size:12.20px;line-height:12.20px;color:#222;transform:scaleX(0.6261);transform-origin:0 0;-webkit-text-stroke:0.30px #222;">14,849 MHz</div>
<div class="t" style="left:778.00px;top:653.47px;font-size:12.20px;line-height:12.20px;color:#111;font-weight:bold;transform:scaleX(0.6372);transform-origin:0 0;-webkit-text-stroke:0.30px #111;">MIS (1):</div>
<div style="position:absolute;left:833.90px;top:647.50px;width:52.10px;height:22.40px;background:#e4e4e4;border:1px solid #a8a8a8;"></div>
<div class="t" style="left:837.20px;top:653.47px;font-size:12.20px;line-height:12.20px;color:#111;transform:scaleX(0.8088);transform-origin:0 0;-webkit-text-stroke:0.30px #111;">0</div>
<svg style="left:875px;top:655px" width="9" height="6" viewBox="0 0 9 6"><path d="M0.5 0.8L4.5 4.8L8.5 0.8" fill="none" stroke="#555" stroke-width="1.1"/></svg>
<div style="position:absolute;left:772.10px;top:699.40px;width:126.65px;height:28.10px;background:#e1e1e1;border:1px solid #adadad;"></div>
<svg style="left:830px;top:704px" width="12" height="18" viewBox="0 0 12 18"><rect x="0.8" y="1" width="10.4" height="15.5" rx="1" fill="#fafafa" stroke="#8a8a8a" stroke-width="0.8"/><rect x="1.2" y="5.3" width="9.6" height="3.5" fill="#2a7ad8"/><path d="M1.5 11.5h9M1.5 14h9" stroke="#9a9a9a" stroke-width="0.6"/></svg>
<div style="position:absolute;left:55.50px;top:739.20px;width:42.00px;height:21.00px;background:linear-gradient(#e4fde4 0%,#c8f8c8 50%,#50cc50 53%,#66f466 100%);border:1px solid #b0b0b0;border-radius:2px;"></div>
<div class="t" style="left:62.80px;top:744.71px;font-size:12.50px;line-height:12.50px;color:#000;transform:scaleX(0.6032);transform-origin:0 0;-webkit-text-stroke:0.30px #000;">Present</div>
<div style="position:absolute;left:55.50px;top:765.20px;width:42.00px;height:21.10px;background:linear-gradient(#e4fde4 0%,#c8f8c8 50%,#50cc50 53%,#66f466 100%);border:1px solid #b0b0b0;border-radius:2px;"></div>
<div class="t" style="left:68.00px;top:770.91px;font-size:12.50px;line-height:12.50px;color:#000;transform:scaleX(0.5736);transform-origin:0 0;-webkit-text-stroke:0.30px #000;">Lock</div>
<div style="position:absolute;left:855.20px;top:739.50px;width:42.80px;height:20.50px;background:linear-gradient(#f8f8f8 0%,#ececec 48%,#dedede 52%,#e8e8e8 100%);border:1px solid #b0b0b0;border-radius:2px;"></div>
<div class="t" style="left:862.70px;top:744.91px;font-size:12.50px;line-height:12.50px;color:#000;transform:scaleX(0.6383);transform-origin:0 0;-webkit-text-stroke:0.30px #000;">Input TS</div>
<div style="position:absolute;left:855.20px;top:765.40px;width:42.80px;height:21.00px;background:linear-gradient(#f8f8f8 0%,#ececec 48%,#dedede 52%,#e8e8e8 100%);border:1px solid #b0b0b0;border-radius:2px;"></div>
<div class="t" style="left:863.80px;top:770.91px;font-size:12.50px;line-height:12.50px;color:#000;transform:scaleX(0.6000);transform-origin:0 0;-webkit-text-stroke:0.30px #000;">Sync TS</div>
<div style="position:absolute;left:101.30px;top:739.20px;width:373.20px;height:21.10px;background:#e8e8e8;border:1px solid #acacac;border-radius:2px;"></div>
<div style="position:absolute;left:102.30px;top:740.20px;width:61.40px;height:19.10px;background:linear-gradient(#ffe2e2 0%,#ffc6c6 52%,#c85454 55%,#fa6c6c 100%);"></div>
<div style="position:absolute;left:163.70px;top:740.20px;width:55.10px;height:19.10px;background:linear-gradient(#fffee8 0%,#fdfbd0 52%,#d2ca52 55%,#fafa66 100%);"></div>
<div style="position:absolute;left:218.80px;top:740.20px;width:254.70px;height:19.10px;background:linear-gradient(#f0f0f0 0%,#e4e4e4 52%,#d0d0d0 55%,#dcdcdc 100%);"></div>
<div class="t" style="left:268.00px;top:745.01px;font-size:12.50px;line-height:12.50px;color:#000;transform:scaleX(0.5928);transform-origin:0 0;-webkit-text-stroke:0.30px #000;">SNR: 9,4 dB</div>
<div style="position:absolute;left:101.30px;top:765.20px;width:373.20px;height:21.20px;background:#e8e8e8;border:1px solid #acacac;border-radius:2px;"></div>
<div style="position:absolute;left:102.30px;top:766.20px;width:36.50px;height:19.20px;background:linear-gradient(#ffe2e2 0%,#ffc6c6 52%,#c85454 55%,#fa6c6c 100%);"></div>
<div style="position:absolute;left:138.80px;top:766.20px;width:150.00px;height:19.20px;background:linear-gradient(#fffee8 0%,#fdfbd0 52%,#d2ca52 55%,#fafa66 100%);"></div>
<div style="position:absolute;left:288.80px;top:766.20px;width:185.70px;height:19.20px;background:linear-gradient(#e2fde2 0%,#c8f8c8 52%,#4cc84c 55%,#66f466 100%);"></div>
<div class="t" style="left:264.00px;top:771.01px;font-size:12.50px;line-height:12.50px;color:#000;transform:scaleX(0.6272);transform-origin:0 0;-webkit-text-stroke:0.30px #000;">Quality: 100%</div>
<div style="position:absolute;left:478.30px;top:739.20px;width:373.10px;height:21.10px;background:#e8e8e8;border:1px solid #acacac;border-radius:2px;"></div>
<div style="position:absolute;left:479.30px;top:740.20px;width:78.70px;height:19.10px;background:linear-gradient(#ffe2e2 0%,#ffc6c6 52%,#c85454 55%,#fa6c6c 100%);"></div>
<div style="position:absolute;left:558.00px;top:740.20px;width:133.90px;height:19.10px;background:linear-gradient(#fffee8 0%,#fdfbd0 52%,#d2ca52 55%,#fafa66 100%);"></div>
<div style="position:absolute;left:691.90px;top:740.20px;width:159.50px;height:19.10px;background:linear-gradient(#e2fde2 0%,#c8f8c8 52%,#4cc84c 55%,#66f466 100%);"></div>
<div class="t" style="left:642.70px;top:745.01px;font-size:12.50px;line-height:12.50px;color:#000;transform:scaleX(0.5859);transform-origin:0 0;-webkit-text-stroke:0.30px #000;">BER: &lt;1.0E-7</div>
<div style="position:absolute;left:478.30px;top:765.20px;width:373.10px;height:21.20px;background:#e8e8e8;border:1px solid #acacac;border-radius:2px;"></div>
<div style="position:absolute;left:479.30px;top:766.20px;width:36.50px;height:19.20px;background:linear-gradient(#ffe2e2 0%,#ffc6c6 52%,#c85454 55%,#fa6c6c 100%);"></div>
<div style="position:absolute;left:515.80px;top:766.20px;width:134.60px;height:19.20px;background:linear-gradient(#fffee8 0%,#fdfbd0 52%,#d2ca52 55%,#fafa66 100%);"></div>
<div style="position:absolute;left:650.40px;top:766.20px;width:200.00px;height:19.20px;background:linear-gradient(#f0f0f0 0%,#e4e4e4 52%,#d0d0d0 55%,#dcdcdc 100%);"></div>
<div class="t" style="left:647.70px;top:771.01px;font-size:12.50px;line-height:12.50px;color:#000;transform:scaleX(0.5906);transform-origin:0 0;-webkit-text-stroke:0.30px #000;">Level: 46%</div>
<div style="position:absolute;left:47.70px;top:796.50px;width:857.30px;height:1.00px;background:#dadada;"></div>
<div style="position:absolute;left:47.70px;top:797.50px;width:857.30px;height:1.00px;background:#ffffff;"></div>
<div class="t" style="left:52.00px;top:803.66px;font-size:12.80px;line-height:12.80px;color:#000;transform:scaleX(0.6421);transform-origin:0 0;-webkit-text-stroke:0.30px #000;">Locked -&gt; Uptime: 00:21:53</div>
<div class="t" style="left:474.60px;top:804.36px;font-size:12.80px;line-height:12.80px;color:#000;transform:scaleX(0.6282);transform-origin:0 0;-webkit-text-stroke:0.30px #000;">Best signal has been seen at 2020-05-17 11.38 with 9,4 dB</div>
<div style="position:absolute;left:902.00px;top:806.00px;width:1.50px;height:1.50px;background:#9a9a9a;"></div>
<div style="position:absolute;left:902.00px;top:810.00px;width:1.50px;height:1.50px;background:#9a9a9a;"></div>
<div style="position:absolute;left:902.00px;top:814.00px;width:1.50px;height:1.50px;background:#9a9a9a;"></div>
<div style="position:absolute;left:898.00px;top:810.00px;width:1.50px;height:1.50px;background:#9a9a9a;"></div>
<div style="position:absolute;left:898.00px;top:814.00px;width:1.50px;height:1.50px;background:#9a9a9a;"></div>
<div style="position:absolute;left:894.00px;top:814.00px;width:1.50px;height:1.50px;background:#9a9a9a;"></div>
<div style="position:absolute;left:392.30px;top:67.80px;width:704.20px;height:84.20px;background:#ffffff;border:1px solid #a4a4a4;box-shadow:0 1px 12px rgba(0,0,0,0.32);"></div>
<div style="position:absolute;left:393.20px;top:101.00px;width:690.60px;height:50.30px;background:#000;"></div>
<div style="position:absolute;left:1083.80px;top:101.00px;width:11.80px;height:50.30px;background:#f0f0f0;"></div>
<svg style="left:1085px;top:103px" width="10" height="47" viewBox="0 0 10 47"><path d="M2 10L5 6.5L8 10M2 36L5 39.5L8 36" fill="none" stroke="#555" stroke-width="1.2"/></svg>
<div style="position:absolute;left:399.10px;top:77.40px;width:10.90px;height:13.50px;background:#0a0a0a;border:1px solid #6a6a6a;border-top:2px solid #cfcfcf;"></div>
<svg style="left:400px;top:79px" width="10" height="11" viewBox="0 0 10 11"><path d="M4.5 4.5H2.5Q1.2 4.5 1.2 6Q1.2 7.5 2.5 7.5H4.5M5.5 4.5H7.5V7.5H9" fill="none" stroke="#e8e8e8" stroke-width="0.9"/></svg>
<div class="t" style="left:414.10px;top:77.08px;font-size:13.60px;line-height:13.60px;color:#9c9c9c;transform:scaleX(0.5964);transform-origin:0 0;-webkit-text-stroke:0.30px #9c9c9c;">Príkazový riadok</div>
<div style="position:absolute;left:1012.00px;top:84.00px;width:8.00px;height:1.10px;background:#777;"></div>
<div style="position:absolute;left:1043.50px;top:78.50px;width:7.50px;height:11.00px;border:1px solid #888;"></div>
<svg style="left:1075px;top:77px" width="10" height="13" viewBox="0 0 10 13"><path d="M1 1.5L9 11.5M9 1.5L1 11.5" stroke="#888" stroke-width="1"/></svg>
<div style="position:absolute;left:393.2px;top:101px;width:690.6px;height:50.3px;overflow:hidden;">
<div class="t" style="left:0.10px;top:21.06px;font-size:15.20px;line-height:15.20px;color:#c8c8c8;font-family:'Liberation Mono', monospace;transform:scaleX(0.6176);transform-origin:0 0;">C:\Users\Roman&gt;Roman Dávid_www.dxsatcs.com_Lučenec/Slovakia_Amos 3/7-4°W_11 139 MHz-V_ACM DATA_Middle East beam_PF 450 cm</div>
</div>
<div style="position:absolute;left:546.00px;top:0.00px;width:108.00px;height:102.70px;background:rgba(255,255,255,0.22);"></div>
<svg style="left:540px;top:0px" width="122" height="104" viewBox="540 0 122 104"><g fill="none" stroke="#a9aee2" stroke-opacity="0.9" stroke-linecap="round"><path d="M563.5 82 A46.5 46.5 0 0 1 631 19.5" stroke-width="2"/><path d="M634.5 22 A46.5 46.5 0 0 1 647.5 57" stroke-width="2.6"/><path d="M647 61.5 A46.5 46.5 0 0 1 635.5 86" stroke-width="2"/><path d="M565 86.5H635.5" stroke-width="1.4"/><path d="M584 14 Q600 45 610 82" stroke-width="1.2"/><path d="M584 14 Q583 12 589 22 Q596 33 598 40" stroke-width="1"/><path d="M585 16 Q587 40 588 55 Q587 60 583 62" stroke-width="1.2"/><path d="M601 46.5 L620 47.5 L609 63" stroke-width="0.9"/><circle cx="579" cy="66" r="2.8" stroke-width="1.2"/><path d="M573 69 Q578 73 586 66 Q596 66 605 80" stroke-width="1.2"/><path d="M579 72 Q578 81 566 86 M582 73 Q583 80 589 86" stroke-width="1.2"/></g><g fill="none" stroke="#f2a2a2" stroke-width="2.6"><path d="M630 27.5 Q638 40 641 55"/><path d="M626 33 Q631 42 633.5 52.5"/></g></svg>
<div class="t" style="left:550.00px;top:87.08px;font-size:14.50px;line-height:14.50px;color:#f2a4a4;font-weight:bold;font-family:'Liberation Serif', serif;transform:scaleX(0.9091);transform-origin:0 0;-webkit-text-stroke:0.30px #f2a4a4;">DX</div>
<div class="t" style="left:570.00px;top:87.08px;font-size:14.50px;line-height:14.50px;color:#b4bae8;font-weight:bold;font-family:'Liberation Serif', serif;transform:scaleX(0.9563);transform-origin:0 0;-webkit-text-stroke:0.30px #b4bae8;">SATCS.COM</div>
<div style="position:absolute;left:1196.00px;top:889.00px;width:1.50px;height:1.50px;background:#a0a0a0;"></div>
<div style="position:absolute;left:1196.00px;top:893.00px;width:1.50px;height:1.50px;background:#a0a0a0;"></div>
<div style="position:absolute;left:1196.00px;top:897.00px;width:1.50px;height:1.50px;background:#a0a0a0;"></div>
<div style="position:absolute;left:1192.00px;top:893.00px;width:1.50px;height:1.50px;background:#a0a0a0;"></div>
<div style="position:absolute;left:1192.00px;top:897.00px;width:1.50px;height:1.50px;background:#a0a0a0;"></div>
<div style="position:absolute;left:1188.00px;top:897.00px;width:1.50px;height:1.50px;background:#a0a0a0;"></div>
</body></html>
